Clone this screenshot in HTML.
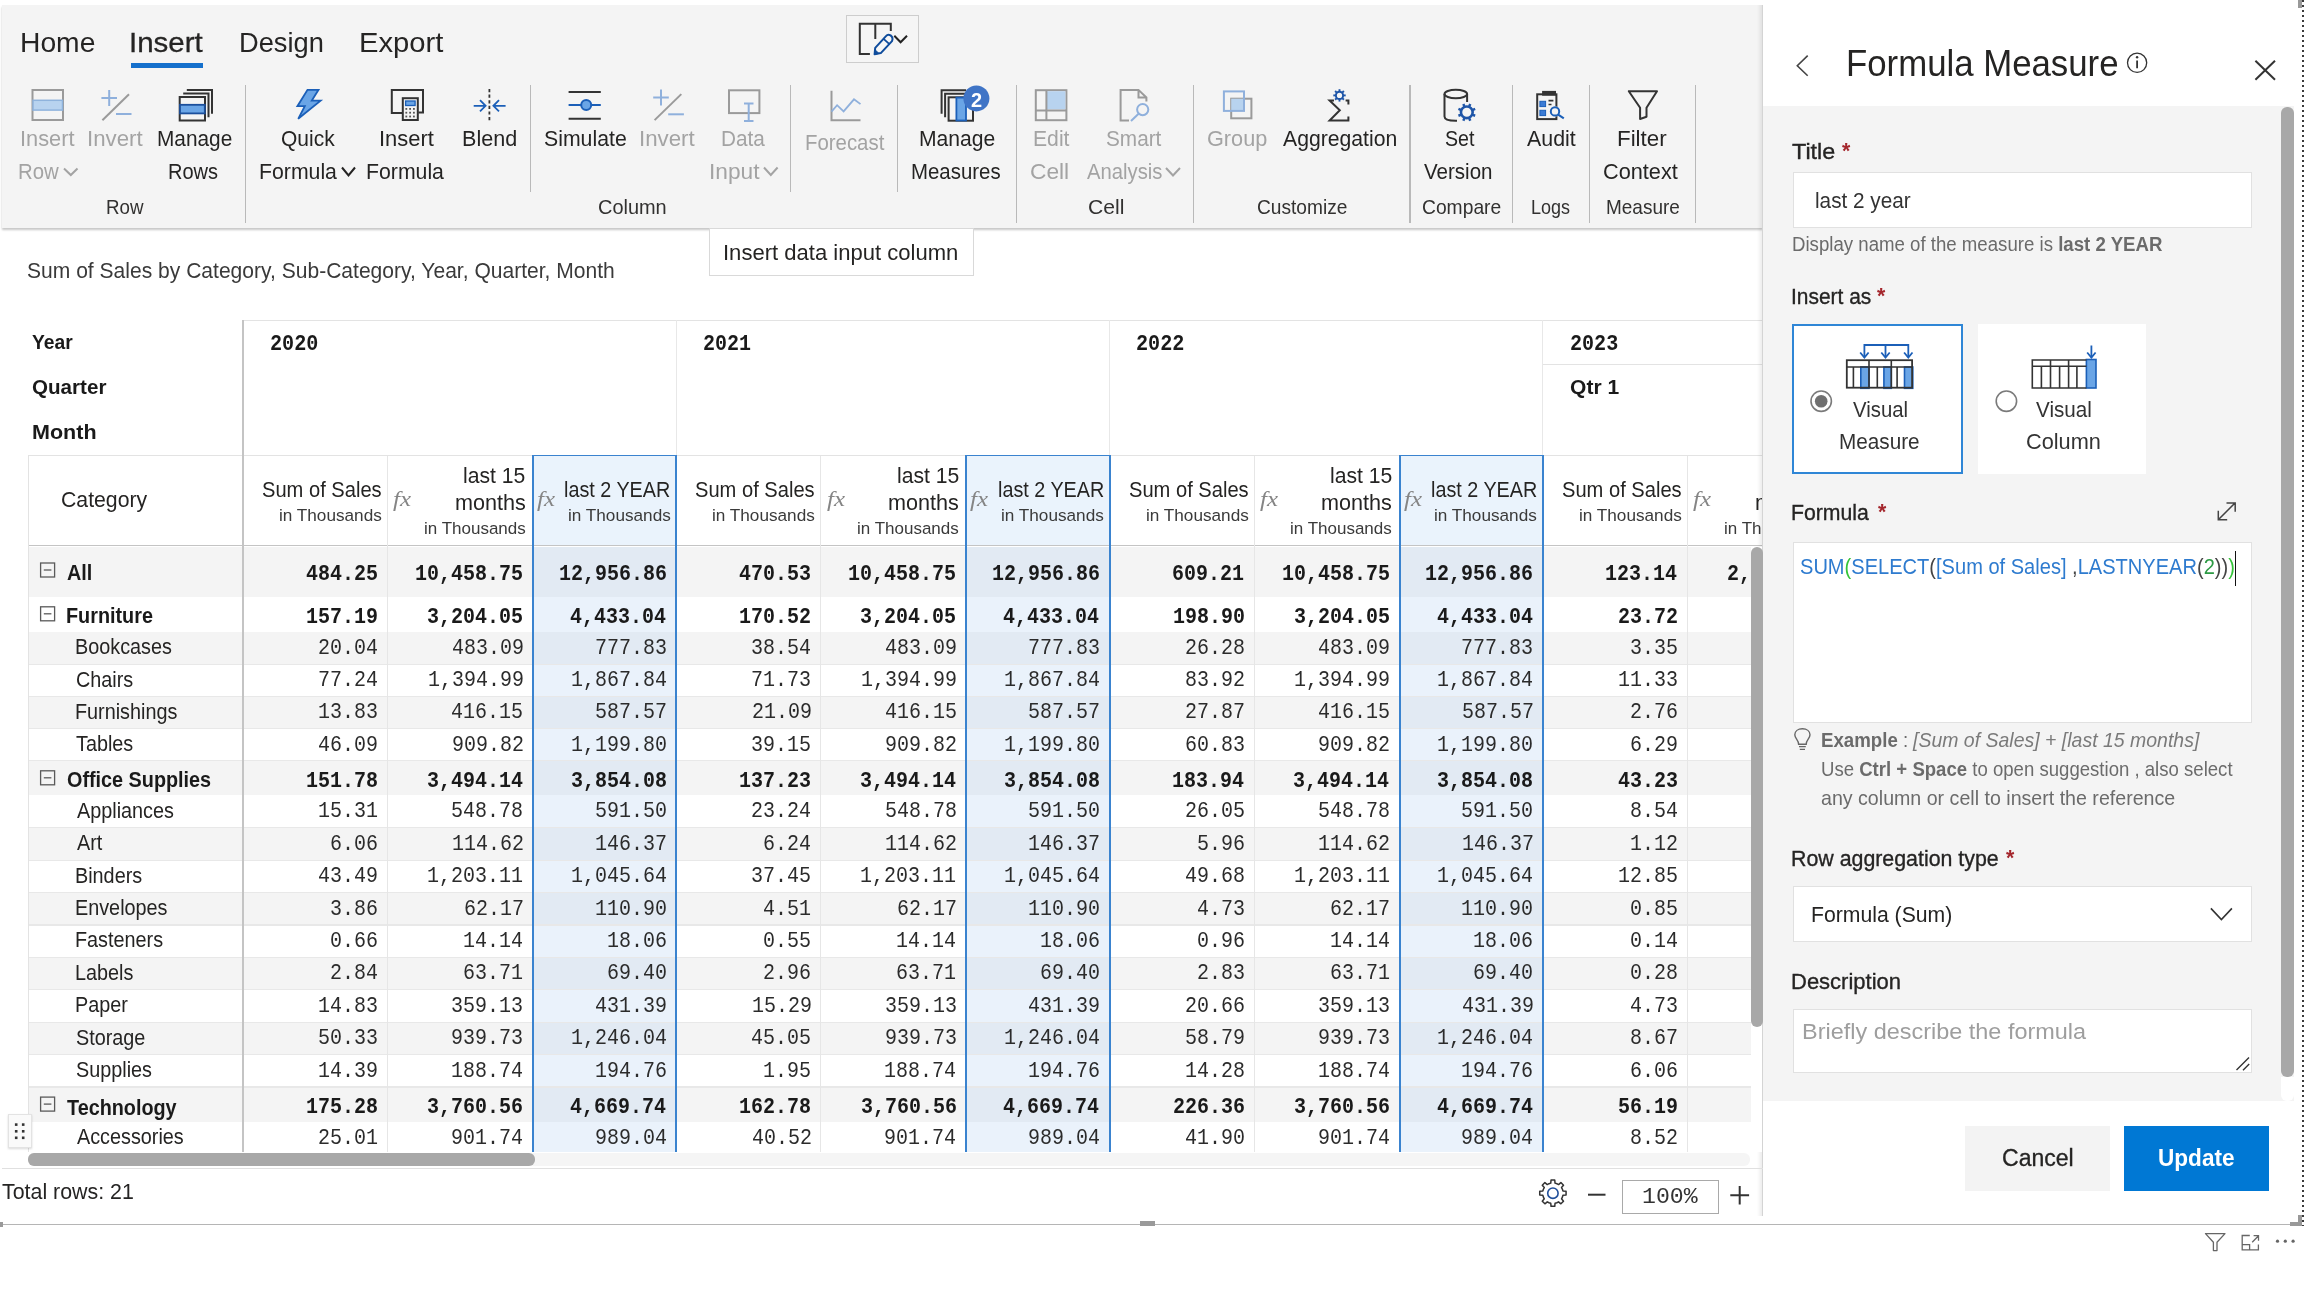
<!DOCTYPE html>
<html><head><meta charset="utf-8"><title>Formula Measure</title>
<style>
html,body{margin:0;padding:0;}
body{width:2304px;height:1290px;position:relative;overflow:hidden;background:#fff;font-family:"Liberation Sans",sans-serif;}
.t{position:absolute;white-space:nowrap;line-height:1;transform-origin:0 0;}
.L{position:absolute;left:0;top:0;width:2304px;height:1290px;will-change:transform;}
</style></head><body>
<div class="L"><div style="position:absolute;left:2.00px;top:5.00px;width:1761.00px;height:223.00px;background:#f4f4f4;box-shadow:0 1.5px 2px rgba(0,0,0,0.22);"></div><div style="position:absolute;left:130.80px;top:62.90px;width:72.20px;height:5.00px;background:#1570cc;"></div><div style="position:absolute;left:845.70px;top:15.30px;width:73.60px;height:48.00px;background:#f5f5f5;box-sizing:border-box;border:1.5px solid #cdcdcd;"></div><div style="position:absolute;left:245.00px;top:85.00px;width:1.20px;height:137.60px;background:#b9b9b9;"></div><div style="position:absolute;left:1016.20px;top:85.00px;width:1.20px;height:137.60px;background:#b9b9b9;"></div><div style="position:absolute;left:1193.00px;top:85.00px;width:1.20px;height:137.60px;background:#b9b9b9;"></div><div style="position:absolute;left:1409.40px;top:85.00px;width:1.20px;height:137.60px;background:#b9b9b9;"></div><div style="position:absolute;left:1511.80px;top:85.00px;width:1.20px;height:137.60px;background:#b9b9b9;"></div><div style="position:absolute;left:1588.90px;top:85.00px;width:1.20px;height:137.60px;background:#b9b9b9;"></div><div style="position:absolute;left:1694.90px;top:85.00px;width:1.20px;height:137.60px;background:#b9b9b9;"></div><div style="position:absolute;left:530.00px;top:85.00px;width:1.20px;height:107.40px;background:#b9b9b9;"></div><div style="position:absolute;left:790.00px;top:85.00px;width:1.20px;height:107.40px;background:#b9b9b9;"></div><div style="position:absolute;left:897.00px;top:85.00px;width:1.20px;height:107.40px;background:#b9b9b9;"></div><svg style="position:absolute;left:0;top:0" width="2304" height="1290" viewBox="0 0 2304 1290" fill="none"><polyline points="64.0,168.5 70.8,175.0 77.5,168.5" stroke="#a3a3a3" stroke-width="2" fill="none"/><polyline points="342.0,167.5 348.5,175.5 355.0,167.5" stroke="#252423" stroke-width="2" fill="none"/><polyline points="764.0,167.5 770.8,175.0 777.6,167.5" stroke="#a3a3a3" stroke-width="2" fill="none"/><polyline points="1166.0,168.0 1173.0,175.5 1180.0,168.0" stroke="#a3a3a3" stroke-width="2" fill="none"/><rect x="32.5" y="90" width="30.5" height="30" stroke="#9a9a9a" stroke-width="2"/><rect x="33" y="100.3" width="29.5" height="9.8" fill="#b8d3ef" stroke="#8fb3dc" stroke-width="1.5"/><path d="M109.2,89.9 v16 M101.4,97.9 h15.6" stroke="#8fb0dc" stroke-width="2"/><path d="M102.4,120.2 L129.0,94.2" stroke="#9a9a9a" stroke-width="2"/><path d="M116.0,114.0 H131.5" stroke="#8fb0dc" stroke-width="2"/><path d="M661.0,89.6 v16 M653.2,97.6 h15.6" stroke="#8fb0dc" stroke-width="2"/><path d="M654.6,120.1 L681.3,94.1" stroke="#9a9a9a" stroke-width="2"/><path d="M668.2,114.3 H683.9" stroke="#8fb0dc" stroke-width="2"/><path d="M186.8,90 H212 V113.8 M183.2,93.5 H208.5 V117.3" stroke="#333" stroke-width="2"/><rect x="179.7" y="97" width="25.3" height="23.5" fill="#f4f4f4" stroke="#333" stroke-width="2"/><rect x="180" y="104.8" width="24.8" height="8.6" fill="#6aa5e6" stroke="#1b4f9c" stroke-width="1.8"/><path d="M307.5,89.8 L318.5,89.8 L311.8,100.6 L320.6,100.6 L298.2,118.8 L304.8,106.2 L297.4,106.2 Z" fill="#6aa5e6" stroke="#1b5fb8" stroke-width="1.8" stroke-linejoin="miter"/><path d="M402,113 H391.8 V90 H423 V112.5 H418.4" stroke="#333" stroke-width="2"/><rect x="402.8" y="98.2" width="15" height="21.8" fill="#f4f4f4" stroke="#333" stroke-width="2"/><rect x="405.6" y="101" width="9.5" height="4.5" fill="#6aa5e6" stroke="#1b5fb8" stroke-width="1.3"/><rect x="405.4" y="108.0" width="1.8" height="1.8" fill="#555"/><rect x="409.2" y="108.0" width="1.8" height="1.8" fill="#555"/><rect x="413.0" y="108.0" width="1.8" height="1.8" fill="#555"/><rect x="405.4" y="111.8" width="1.8" height="1.8" fill="#555"/><rect x="409.2" y="111.8" width="1.8" height="1.8" fill="#555"/><rect x="413.0" y="111.8" width="1.8" height="1.8" fill="#555"/><rect x="405.4" y="115.6" width="1.8" height="1.8" fill="#555"/><rect x="409.2" y="115.6" width="1.8" height="1.8" fill="#555"/><rect x="413.0" y="115.6" width="1.8" height="1.8" fill="#555"/><path d="M489.4,89 V121.5" stroke="#333" stroke-width="1.8" stroke-dasharray="3.2,2.4"/><path d="M473.7,105.8 H485.5 M480,100.2 L485.6,105.8 L480,111.4 M505.6,105.8 H493.3 M499,100.2 L493.4,105.8 L499,111.4" stroke="#1b5fb8" stroke-width="1.8"/><path d="M568.6,91.9 H600.8 M568.6,118.8 H600.8" stroke="#333" stroke-width="2"/><path d="M568.6,104.9 H600.8" stroke="#1b5fb8" stroke-width="2"/><circle cx="586.2" cy="104.9" r="5" fill="#6aa5e6" stroke="#1b5fb8" stroke-width="2"/><rect x="729" y="90.3" width="30.4" height="22.8" stroke="#9a9a9a" stroke-width="2"/><path d="M748.7,103.6 V121 M744,103.6 H753.5 M744,121 H753.5" stroke="#8fb0dc" stroke-width="2"/><path d="M831.5,90.8 V120.3 H860.5" stroke="#9a9a9a" stroke-width="2"/><polyline points="831.5,111.7 837.1,105.2 843.6,111.4 854,99.3 860.5,104.1" stroke="#8fb0dc" stroke-width="1.8"/><path d="M941.6,113.8 V90.3 H966 M945.1,117.3 V93.8 H969.5" stroke="#333" stroke-width="2"/><rect x="948.6" y="97.3" width="24.4" height="23.4" fill="#f4f4f4" stroke="#333" stroke-width="2"/><rect x="956.4" y="97.6" width="9.6" height="22.9" fill="#6aa5e6" stroke="#1b5fb8" stroke-width="1.8"/><circle cx="976.4" cy="98.4" r="13" fill="#3f74c6"/><rect x="1035.8" y="90.2" width="30.6" height="30" stroke="#9a9a9a" stroke-width="2"/><rect x="1047" y="91.2" width="18.4" height="18.2" fill="#b8d3ef"/><path d="M1046.4,90.2 V120.2 M1035.8,110.4 H1066.4" stroke="#9a9a9a" stroke-width="2"/><path d="M1129,120.6 H1120.6 V89.9 H1138.5 L1146.4,97.5 V101.5 M1138.5,89.9 V97.5 H1146.4" stroke="#9a9a9a" stroke-width="2" fill="none"/><circle cx="1142.7" cy="109.6" r="5.6" stroke="#8fb0dc" stroke-width="2" fill="#f4f4f4"/><path d="M1138.6,113.8 L1131,121" stroke="#8fb0dc" stroke-width="2"/><rect x="1231.2" y="98.7" width="20.2" height="19.6" stroke="#9a9a9a" stroke-width="2"/><rect x="1231.2" y="98.7" width="12.8" height="12.2" fill="#b8d3ef"/><rect x="1223.9" y="91.4" width="20.1" height="19.5" stroke="#8fb0dc" stroke-width="2"/><path d="M1334,100.6 H1329.6 L1339.8,110.2 L1329.6,120.6 H1348.4 V116.5 M1345.6,100.6 H1348.4 V104.5" stroke="#333" stroke-width="2" fill="none"/><circle cx="1339.5" cy="95.4" r="6.8" fill="#f4f4f4"/><circle cx="1339.50" cy="95.40" r="3.60" stroke="#1f56a8" stroke-width="2.00" fill="none"/><path d="M1343.10,95.40 L1345.70,95.40" stroke="#1f56a8" stroke-width="1.90"/><path d="M1342.05,97.95 L1343.88,99.78" stroke="#1f56a8" stroke-width="1.90"/><path d="M1339.50,99.00 L1339.50,101.60" stroke="#1f56a8" stroke-width="1.90"/><path d="M1336.95,97.95 L1335.12,99.78" stroke="#1f56a8" stroke-width="1.90"/><path d="M1335.90,95.40 L1333.30,95.40" stroke="#1f56a8" stroke-width="1.90"/><path d="M1336.95,92.85 L1335.12,91.02" stroke="#1f56a8" stroke-width="1.90"/><path d="M1339.50,91.80 L1339.50,89.20" stroke="#1f56a8" stroke-width="1.90"/><path d="M1342.05,92.85 L1343.88,91.02" stroke="#1f56a8" stroke-width="1.90"/><path d="M1444.5,94 V116.5 Q1444.5,120.8 1455.8,120.8 H1457" stroke="#333" stroke-width="2" fill="none"/><ellipse cx="1455.8" cy="94" rx="11.3" ry="4.2" stroke="#333" stroke-width="2" fill="none"/><path d="M1467.1,94 V102" stroke="#333" stroke-width="2"/><circle cx="1466.6" cy="112" r="9.5" fill="#f4f4f4"/><circle cx="1466.80" cy="112.30" r="5.85" stroke="#1f56a8" stroke-width="2.60" fill="none"/><path d="M1472.20,114.54 L1475.16,115.76" stroke="#1f56a8" stroke-width="2.47"/><path d="M1469.04,117.70 L1470.26,120.66" stroke="#1f56a8" stroke-width="2.47"/><path d="M1464.56,117.70 L1463.34,120.66" stroke="#1f56a8" stroke-width="2.47"/><path d="M1461.40,114.54 L1458.44,115.76" stroke="#1f56a8" stroke-width="2.47"/><path d="M1461.40,110.06 L1458.44,108.84" stroke="#1f56a8" stroke-width="2.47"/><path d="M1464.56,106.90 L1463.34,103.94" stroke="#1f56a8" stroke-width="2.47"/><path d="M1469.04,106.90 L1470.26,103.94" stroke="#1f56a8" stroke-width="2.47"/><path d="M1472.20,110.06 L1475.16,108.84" stroke="#1f56a8" stroke-width="2.47"/><rect x="1537.2" y="94.3" width="19.2" height="24.8" stroke="#333" stroke-width="2"/><rect x="1542.1" y="90.9" width="13.9" height="4.8" fill="#333"/><rect x="1539.9" y="101.3" width="5.7" height="5.3" fill="#3a7bd5" stroke="#1b5fb8" stroke-width="1"/><rect x="1539.9" y="110.3" width="5.7" height="5.3" fill="#3a7bd5" stroke="#1b5fb8" stroke-width="1"/><path d="M1548.5,100.6 H1553.4 M1548.5,104.5 H1551.5" stroke="#333" stroke-width="1.6"/><circle cx="1555" cy="111.4" r="5.2" fill="#f4f4f4"/><circle cx="1555" cy="111.4" r="4.2" stroke="#1b5fb8" stroke-width="2"/><path d="M1558.2,114.6 L1563.8,118.4" stroke="#1b5fb8" stroke-width="2"/><path d="M1628.8,91.2 H1657 L1646.5,107.7 V116.8 L1640.1,119 V107.7 Z" stroke="#333" stroke-width="2" stroke-linejoin="round" fill="none"/><path d="M869.9,54.1 H859.8 V23.7 H890.8 V31 M875.3,23.7 V38.9" stroke="#333" stroke-width="2" fill="none"/><path d="M874.6,54.3 L880.8,53.1 L892.0,41.1 Q893.5,37.6 890.6,35.4 Q887.8,33.8 886.2,35.9 L875.2,47.9 Z" fill="#f7f7f7" stroke="#0f4c9c" stroke-width="2" stroke-linejoin="round"/><path d="M874.6,54.3 L878.9,53.4 L875.6,50.3 Z" fill="#0f4c9c" stroke="#0f4c9c" stroke-width="1"/><path d="M889.4,44.2 L883.6,38.9" stroke="#0f4c9c" stroke-width="1.8"/><polyline points="894.3,35.7 900.6,42.2 907,35.7" stroke="#222" stroke-width="2" fill="none"/></svg><div class="t" style="left:19.68px;top:28.17px;font:normal normal 28.50px/1 'Liberation Sans', sans-serif;color:#252423;transform:scaleX(0.9913);">Home</div><div class="t" style="left:129.08px;top:28.17px;font:normal normal 28.50px/1 'Liberation Sans', sans-serif;color:#252423;transform:scaleX(1.0344);-webkit-text-stroke:0.3px #252423;">Insert</div><div class="t" style="left:239.37px;top:28.17px;font:normal normal 28.50px/1 'Liberation Sans', sans-serif;color:#252423;transform:scaleX(0.9559);">Design</div><div class="t" style="left:359.00px;top:28.17px;font:normal normal 28.50px/1 'Liberation Sans', sans-serif;color:#252423;transform:scaleX(1.0247);">Export</div><div class="t" style="left:19.69px;top:128.37px;font:normal normal 22.00px/1 'Liberation Sans', sans-serif;color:#a3a3a3;transform:scaleX(0.9898);">Insert</div><div class="t" style="left:17.53px;top:160.67px;font:normal normal 22.00px/1 'Liberation Sans', sans-serif;color:#a3a3a3;transform:scaleX(0.9251);">Row</div><div class="t" style="left:87.25px;top:128.37px;font:normal normal 22.00px/1 'Liberation Sans', sans-serif;color:#a3a3a3;transform:scaleX(1.0106);">Invert</div><div class="t" style="left:157.09px;top:128.37px;font:normal normal 22.00px/1 'Liberation Sans', sans-serif;color:#252423;transform:scaleX(0.9461);">Manage</div><div class="t" style="left:168.36px;top:160.67px;font:normal normal 22.00px/1 'Liberation Sans', sans-serif;color:#252423;transform:scaleX(0.9100);">Rows</div><div class="t" style="left:105.76px;top:196.89px;font:normal normal 20.80px/1 'Liberation Sans', sans-serif;color:#323130;transform:scaleX(0.9010);">Row</div><div class="t" style="left:280.71px;top:128.37px;font:normal normal 22.00px/1 'Liberation Sans', sans-serif;color:#252423;transform:scaleX(0.9540);">Quick</div><div class="t" style="left:259.06px;top:160.67px;font:normal normal 22.00px/1 'Liberation Sans', sans-serif;color:#252423;transform:scaleX(0.9660);">Formula</div><div class="t" style="left:379.28px;top:128.37px;font:normal normal 22.00px/1 'Liberation Sans', sans-serif;color:#252423;transform:scaleX(0.9974);">Insert</div><div class="t" style="left:365.86px;top:160.67px;font:normal normal 22.00px/1 'Liberation Sans', sans-serif;color:#252423;transform:scaleX(0.9660);">Formula</div><div class="t" style="left:462.23px;top:128.37px;font:normal normal 22.00px/1 'Liberation Sans', sans-serif;color:#252423;transform:scaleX(0.9800);">Blend</div><div class="t" style="left:543.53px;top:128.37px;font:normal normal 22.00px/1 'Liberation Sans', sans-serif;color:#252423;transform:scaleX(0.9663);">Simulate</div><div class="t" style="left:639.44px;top:128.37px;font:normal normal 22.00px/1 'Liberation Sans', sans-serif;color:#a3a3a3;transform:scaleX(1.0125);">Invert</div><div class="t" style="left:721.30px;top:128.37px;font:normal normal 22.00px/1 'Liberation Sans', sans-serif;color:#a3a3a3;transform:scaleX(0.9445);">Data</div><div class="t" style="left:709.11px;top:160.67px;font:normal normal 22.00px/1 'Liberation Sans', sans-serif;color:#a3a3a3;transform:scaleX(1.0311);">Input</div><div class="t" style="left:597.59px;top:196.89px;font:normal normal 20.80px/1 'Liberation Sans', sans-serif;color:#323130;transform:scaleX(0.9586);">Column</div><div class="t" style="left:804.83px;top:132.07px;font:normal normal 22.00px/1 'Liberation Sans', sans-serif;color:#a3a3a3;transform:scaleX(0.9267);">Forecast</div><div class="t" style="left:919.27px;top:128.37px;font:normal normal 22.00px/1 'Liberation Sans', sans-serif;color:#252423;transform:scaleX(0.9592);">Manage</div><div class="t" style="left:910.93px;top:160.67px;font:normal normal 22.00px/1 'Liberation Sans', sans-serif;color:#252423;transform:scaleX(0.9277);">Measures</div><div class="t" style="left:1032.56px;top:128.37px;font:normal normal 22.00px/1 'Liberation Sans', sans-serif;color:#a3a3a3;transform:scaleX(0.9623);">Edit</div><div class="t" style="left:1030.35px;top:160.67px;font:normal normal 22.00px/1 'Liberation Sans', sans-serif;color:#a3a3a3;transform:scaleX(1.0335);">Cell</div><div class="t" style="left:1105.66px;top:128.37px;font:normal normal 22.00px/1 'Liberation Sans', sans-serif;color:#a3a3a3;transform:scaleX(0.9439);">Smart</div><div class="t" style="left:1087.36px;top:160.67px;font:normal normal 22.00px/1 'Liberation Sans', sans-serif;color:#a3a3a3;transform:scaleX(0.9200);">Analysis</div><div class="t" style="left:1087.83px;top:196.89px;font:normal normal 20.80px/1 'Liberation Sans', sans-serif;color:#323130;transform:scaleX(1.0156);">Cell</div><div class="t" style="left:1207.31px;top:128.37px;font:normal normal 22.00px/1 'Liberation Sans', sans-serif;color:#a3a3a3;transform:scaleX(0.9860);">Group</div><div class="t" style="left:1282.96px;top:128.37px;font:normal normal 22.00px/1 'Liberation Sans', sans-serif;color:#252423;transform:scaleX(0.9626);">Aggregation</div><div class="t" style="left:1256.83px;top:196.89px;font:normal normal 20.80px/1 'Liberation Sans', sans-serif;color:#323130;transform:scaleX(0.9203);">Customize</div><div class="t" style="left:1444.91px;top:128.37px;font:normal normal 22.00px/1 'Liberation Sans', sans-serif;color:#252423;transform:scaleX(0.8911);">Set</div><div class="t" style="left:1424.31px;top:160.67px;font:normal normal 22.00px/1 'Liberation Sans', sans-serif;color:#252423;transform:scaleX(0.9337);">Version</div><div class="t" style="left:1421.52px;top:196.89px;font:normal normal 20.80px/1 'Liberation Sans', sans-serif;color:#323130;transform:scaleX(0.9262);">Compare</div><div class="t" style="left:1526.86px;top:128.37px;font:normal normal 22.00px/1 'Liberation Sans', sans-serif;color:#252423;transform:scaleX(0.9709);">Audit</div><div class="t" style="left:1531.02px;top:196.89px;font:normal normal 20.80px/1 'Liberation Sans', sans-serif;color:#323130;transform:scaleX(0.8652);">Logs</div><div class="t" style="left:1617.37px;top:128.37px;font:normal normal 22.00px/1 'Liberation Sans', sans-serif;color:#252423;transform:scaleX(1.0145);">Filter</div><div class="t" style="left:1602.90px;top:160.67px;font:normal normal 22.00px/1 'Liberation Sans', sans-serif;color:#252423;transform:scaleX(0.9859);">Context</div><div class="t" style="left:1605.64px;top:196.89px;font:normal normal 20.80px/1 'Liberation Sans', sans-serif;color:#323130;transform:scaleX(0.9120);">Measure</div><div class="t" style="left:970.90px;top:88.72px;font:normal bold 21.00px/1 'Liberation Sans', sans-serif;color:#fff;transform:scaleX(0.9500);">2</div><div class="t" style="left:26.54px;top:260.15px;font:normal normal 22.50px/1 'Liberation Sans', sans-serif;color:#3a3a3a;transform:scaleX(0.9356);">Sum of Sales by Category, Sub-Category, Year, Quarter, Month</div></div>
<div class="L" style="width:1763px;height:1152px;overflow:hidden"><div style="position:absolute;left:28.00px;top:546.50px;width:1723.00px;height:50.30px;background:#f4f4f4;"></div><div style="position:absolute;left:532.90px;top:546.50px;width:143.40px;height:50.30px;background:#e2eaf3;"></div><div style="position:absolute;left:966.20px;top:546.50px;width:143.40px;height:50.30px;background:#e2eaf3;"></div><div style="position:absolute;left:1399.50px;top:546.50px;width:143.40px;height:50.30px;background:#e2eaf3;"></div><div style="position:absolute;left:28.00px;top:596.80px;width:1723.00px;height:35.20px;background:#ffffff;"></div><div style="position:absolute;left:532.90px;top:596.80px;width:143.40px;height:35.20px;background:#eaf2fb;"></div><div style="position:absolute;left:966.20px;top:596.80px;width:143.40px;height:35.20px;background:#eaf2fb;"></div><div style="position:absolute;left:1399.50px;top:596.80px;width:143.40px;height:35.20px;background:#eaf2fb;"></div><div style="position:absolute;left:28.00px;top:632.00px;width:1723.00px;height:32.20px;background:#f4f4f4;"></div><div style="position:absolute;left:532.90px;top:632.00px;width:143.40px;height:32.20px;background:#e2eaf3;"></div><div style="position:absolute;left:966.20px;top:632.00px;width:143.40px;height:32.20px;background:#e2eaf3;"></div><div style="position:absolute;left:1399.50px;top:632.00px;width:143.40px;height:32.20px;background:#e2eaf3;"></div><div style="position:absolute;left:28.00px;top:664.20px;width:1723.00px;height:32.20px;background:#ffffff;"></div><div style="position:absolute;left:532.90px;top:664.20px;width:143.40px;height:32.20px;background:#eaf2fb;"></div><div style="position:absolute;left:966.20px;top:664.20px;width:143.40px;height:32.20px;background:#eaf2fb;"></div><div style="position:absolute;left:1399.50px;top:664.20px;width:143.40px;height:32.20px;background:#eaf2fb;"></div><div style="position:absolute;left:28.00px;top:696.40px;width:1723.00px;height:32.20px;background:#f4f4f4;"></div><div style="position:absolute;left:532.90px;top:696.40px;width:143.40px;height:32.20px;background:#e2eaf3;"></div><div style="position:absolute;left:966.20px;top:696.40px;width:143.40px;height:32.20px;background:#e2eaf3;"></div><div style="position:absolute;left:1399.50px;top:696.40px;width:143.40px;height:32.20px;background:#e2eaf3;"></div><div style="position:absolute;left:28.00px;top:728.60px;width:1723.00px;height:32.20px;background:#ffffff;"></div><div style="position:absolute;left:532.90px;top:728.60px;width:143.40px;height:32.20px;background:#eaf2fb;"></div><div style="position:absolute;left:966.20px;top:728.60px;width:143.40px;height:32.20px;background:#eaf2fb;"></div><div style="position:absolute;left:1399.50px;top:728.60px;width:143.40px;height:32.20px;background:#eaf2fb;"></div><div style="position:absolute;left:28.00px;top:760.80px;width:1723.00px;height:34.50px;background:#f4f4f4;"></div><div style="position:absolute;left:532.90px;top:760.80px;width:143.40px;height:34.50px;background:#e2eaf3;"></div><div style="position:absolute;left:966.20px;top:760.80px;width:143.40px;height:34.50px;background:#e2eaf3;"></div><div style="position:absolute;left:1399.50px;top:760.80px;width:143.40px;height:34.50px;background:#e2eaf3;"></div><div style="position:absolute;left:28.00px;top:795.30px;width:1723.00px;height:32.42px;background:#ffffff;"></div><div style="position:absolute;left:532.90px;top:795.30px;width:143.40px;height:32.42px;background:#eaf2fb;"></div><div style="position:absolute;left:966.20px;top:795.30px;width:143.40px;height:32.42px;background:#eaf2fb;"></div><div style="position:absolute;left:1399.50px;top:795.30px;width:143.40px;height:32.42px;background:#eaf2fb;"></div><div style="position:absolute;left:28.00px;top:827.72px;width:1723.00px;height:32.42px;background:#f4f4f4;"></div><div style="position:absolute;left:532.90px;top:827.72px;width:143.40px;height:32.42px;background:#e2eaf3;"></div><div style="position:absolute;left:966.20px;top:827.72px;width:143.40px;height:32.42px;background:#e2eaf3;"></div><div style="position:absolute;left:1399.50px;top:827.72px;width:143.40px;height:32.42px;background:#e2eaf3;"></div><div style="position:absolute;left:28.00px;top:860.14px;width:1723.00px;height:32.42px;background:#ffffff;"></div><div style="position:absolute;left:532.90px;top:860.14px;width:143.40px;height:32.42px;background:#eaf2fb;"></div><div style="position:absolute;left:966.20px;top:860.14px;width:143.40px;height:32.42px;background:#eaf2fb;"></div><div style="position:absolute;left:1399.50px;top:860.14px;width:143.40px;height:32.42px;background:#eaf2fb;"></div><div style="position:absolute;left:28.00px;top:892.56px;width:1723.00px;height:32.42px;background:#f4f4f4;"></div><div style="position:absolute;left:532.90px;top:892.56px;width:143.40px;height:32.42px;background:#e2eaf3;"></div><div style="position:absolute;left:966.20px;top:892.56px;width:143.40px;height:32.42px;background:#e2eaf3;"></div><div style="position:absolute;left:1399.50px;top:892.56px;width:143.40px;height:32.42px;background:#e2eaf3;"></div><div style="position:absolute;left:28.00px;top:924.98px;width:1723.00px;height:32.42px;background:#ffffff;"></div><div style="position:absolute;left:532.90px;top:924.98px;width:143.40px;height:32.42px;background:#eaf2fb;"></div><div style="position:absolute;left:966.20px;top:924.98px;width:143.40px;height:32.42px;background:#eaf2fb;"></div><div style="position:absolute;left:1399.50px;top:924.98px;width:143.40px;height:32.42px;background:#eaf2fb;"></div><div style="position:absolute;left:28.00px;top:957.40px;width:1723.00px;height:32.42px;background:#f4f4f4;"></div><div style="position:absolute;left:532.90px;top:957.40px;width:143.40px;height:32.42px;background:#e2eaf3;"></div><div style="position:absolute;left:966.20px;top:957.40px;width:143.40px;height:32.42px;background:#e2eaf3;"></div><div style="position:absolute;left:1399.50px;top:957.40px;width:143.40px;height:32.42px;background:#e2eaf3;"></div><div style="position:absolute;left:28.00px;top:989.82px;width:1723.00px;height:32.42px;background:#ffffff;"></div><div style="position:absolute;left:532.90px;top:989.82px;width:143.40px;height:32.42px;background:#eaf2fb;"></div><div style="position:absolute;left:966.20px;top:989.82px;width:143.40px;height:32.42px;background:#eaf2fb;"></div><div style="position:absolute;left:1399.50px;top:989.82px;width:143.40px;height:32.42px;background:#eaf2fb;"></div><div style="position:absolute;left:28.00px;top:1022.24px;width:1723.00px;height:32.42px;background:#f4f4f4;"></div><div style="position:absolute;left:532.90px;top:1022.24px;width:143.40px;height:32.42px;background:#e2eaf3;"></div><div style="position:absolute;left:966.20px;top:1022.24px;width:143.40px;height:32.42px;background:#e2eaf3;"></div><div style="position:absolute;left:1399.50px;top:1022.24px;width:143.40px;height:32.42px;background:#e2eaf3;"></div><div style="position:absolute;left:28.00px;top:1054.66px;width:1723.00px;height:32.42px;background:#ffffff;"></div><div style="position:absolute;left:532.90px;top:1054.66px;width:143.40px;height:32.42px;background:#eaf2fb;"></div><div style="position:absolute;left:966.20px;top:1054.66px;width:143.40px;height:32.42px;background:#eaf2fb;"></div><div style="position:absolute;left:1399.50px;top:1054.66px;width:143.40px;height:32.42px;background:#eaf2fb;"></div><div style="position:absolute;left:28.00px;top:1087.08px;width:1723.00px;height:34.90px;background:#f4f4f4;"></div><div style="position:absolute;left:532.90px;top:1087.08px;width:143.40px;height:34.90px;background:#e2eaf3;"></div><div style="position:absolute;left:966.20px;top:1087.08px;width:143.40px;height:34.90px;background:#e2eaf3;"></div><div style="position:absolute;left:1399.50px;top:1087.08px;width:143.40px;height:34.90px;background:#e2eaf3;"></div><div style="position:absolute;left:28.00px;top:1121.98px;width:1723.00px;height:32.40px;background:#ffffff;"></div><div style="position:absolute;left:532.90px;top:1121.98px;width:143.40px;height:32.40px;background:#eaf2fb;"></div><div style="position:absolute;left:966.20px;top:1121.98px;width:143.40px;height:32.40px;background:#eaf2fb;"></div><div style="position:absolute;left:1399.50px;top:1121.98px;width:143.40px;height:32.40px;background:#eaf2fb;"></div><div style="position:absolute;left:28.00px;top:663.60px;width:1723.00px;height:1.20px;background:#e8e8e8;"></div><div style="position:absolute;left:28.00px;top:695.80px;width:1723.00px;height:1.20px;background:#e8e8e8;"></div><div style="position:absolute;left:28.00px;top:728.00px;width:1723.00px;height:1.20px;background:#e8e8e8;"></div><div style="position:absolute;left:28.00px;top:760.20px;width:1723.00px;height:1.20px;background:#e8e8e8;"></div><div style="position:absolute;left:28.00px;top:827.12px;width:1723.00px;height:1.20px;background:#e8e8e8;"></div><div style="position:absolute;left:28.00px;top:859.54px;width:1723.00px;height:1.20px;background:#e8e8e8;"></div><div style="position:absolute;left:28.00px;top:891.96px;width:1723.00px;height:1.20px;background:#e8e8e8;"></div><div style="position:absolute;left:28.00px;top:924.38px;width:1723.00px;height:1.20px;background:#e8e8e8;"></div><div style="position:absolute;left:28.00px;top:956.80px;width:1723.00px;height:1.20px;background:#e8e8e8;"></div><div style="position:absolute;left:28.00px;top:989.22px;width:1723.00px;height:1.20px;background:#e8e8e8;"></div><div style="position:absolute;left:28.00px;top:1021.64px;width:1723.00px;height:1.20px;background:#e8e8e8;"></div><div style="position:absolute;left:28.00px;top:1054.06px;width:1723.00px;height:1.20px;background:#e8e8e8;"></div><div style="position:absolute;left:28.00px;top:1086.48px;width:1723.00px;height:1.20px;background:#e8e8e8;"></div><div style="position:absolute;left:532.90px;top:455.50px;width:143.40px;height:90.50px;background:#eaf3fc;"></div><div style="position:absolute;left:966.20px;top:455.50px;width:143.40px;height:90.50px;background:#eaf3fc;"></div><div style="position:absolute;left:1399.50px;top:455.50px;width:143.40px;height:90.50px;background:#eaf3fc;"></div><div style="position:absolute;left:243.00px;top:319.50px;width:1520.00px;height:1.20px;background:#e3e3e3;"></div><div style="position:absolute;left:28.00px;top:455.00px;width:1735.00px;height:1.00px;background:#e3e3e3;"></div><div style="position:absolute;left:28.00px;top:544.80px;width:1735.00px;height:1.70px;background:#c4c4c4;"></div><div style="position:absolute;left:27.50px;top:455.50px;width:1.20px;height:696.50px;background:#e3e3e3;"></div><div style="position:absolute;left:242.00px;top:320.00px;width:2.00px;height:832.00px;background:#c4c4c4;"></div><div style="position:absolute;left:675.80px;top:320.00px;width:1.00px;height:135.50px;background:#e8e8e8;"></div><div style="position:absolute;left:1109.10px;top:320.00px;width:1.00px;height:135.50px;background:#e8e8e8;"></div><div style="position:absolute;left:1542.40px;top:320.00px;width:1.00px;height:135.50px;background:#e8e8e8;"></div><div style="position:absolute;left:387.10px;top:455.50px;width:1.00px;height:696.50px;background:#e6e6e6;"></div><div style="position:absolute;left:532.40px;top:455.50px;width:1.00px;height:696.50px;background:#e6e6e6;"></div><div style="position:absolute;left:675.80px;top:455.50px;width:1.00px;height:696.50px;background:#e6e6e6;"></div><div style="position:absolute;left:820.40px;top:455.50px;width:1.00px;height:696.50px;background:#e6e6e6;"></div><div style="position:absolute;left:965.70px;top:455.50px;width:1.00px;height:696.50px;background:#e6e6e6;"></div><div style="position:absolute;left:1109.10px;top:455.50px;width:1.00px;height:696.50px;background:#e6e6e6;"></div><div style="position:absolute;left:1253.70px;top:455.50px;width:1.00px;height:696.50px;background:#e6e6e6;"></div><div style="position:absolute;left:1399.00px;top:455.50px;width:1.00px;height:696.50px;background:#e6e6e6;"></div><div style="position:absolute;left:1542.40px;top:455.50px;width:1.00px;height:696.50px;background:#e6e6e6;"></div><div style="position:absolute;left:1687.00px;top:455.50px;width:1.00px;height:696.50px;background:#e6e6e6;"></div><div style="position:absolute;left:1832.30px;top:455.50px;width:1.00px;height:696.50px;background:#e6e6e6;"></div><div style="position:absolute;left:1542.90px;top:363.70px;width:220.10px;height:1.10px;background:#e3e3e3;"></div><div style="position:absolute;left:531.90px;top:454.60px;width:145.40px;height:1.80px;background:#3a83cf;"></div><div style="position:absolute;left:531.90px;top:454.60px;width:2.00px;height:697.40px;background:#3a83cf;"></div><div style="position:absolute;left:675.30px;top:454.60px;width:2.00px;height:697.40px;background:#3a83cf;"></div><div style="position:absolute;left:965.20px;top:454.60px;width:145.40px;height:1.80px;background:#3a83cf;"></div><div style="position:absolute;left:965.20px;top:454.60px;width:2.00px;height:697.40px;background:#3a83cf;"></div><div style="position:absolute;left:1108.60px;top:454.60px;width:2.00px;height:697.40px;background:#3a83cf;"></div><div style="position:absolute;left:1398.50px;top:454.60px;width:145.40px;height:1.80px;background:#3a83cf;"></div><div style="position:absolute;left:1398.50px;top:454.60px;width:2.00px;height:697.40px;background:#3a83cf;"></div><div style="position:absolute;left:1541.90px;top:454.60px;width:2.00px;height:697.40px;background:#3a83cf;"></div><svg style="position:absolute;left:0;top:0" width="2304" height="1290" viewBox="0 0 2304 1290" fill="none"><rect x="40.6" y="563.0" width="14" height="14" stroke="#5a5a5a" stroke-width="1.3" fill="none"/><path d="M43.8,570.0 H51.4" stroke="#5a5a5a" stroke-width="1.3"/><rect x="40.6" y="606.8" width="14" height="14" stroke="#5a5a5a" stroke-width="1.3" fill="none"/><path d="M43.8,613.8 H51.4" stroke="#5a5a5a" stroke-width="1.3"/><rect x="40.6" y="770.8" width="14" height="14" stroke="#5a5a5a" stroke-width="1.3" fill="none"/><path d="M43.8,777.8 H51.4" stroke="#5a5a5a" stroke-width="1.3"/><rect x="40.6" y="1097.1" width="14" height="14" stroke="#5a5a5a" stroke-width="1.3" fill="none"/><path d="M43.8,1104.1 H51.4" stroke="#5a5a5a" stroke-width="1.3"/></svg><div class="t" style="left:32.47px;top:331.59px;font:normal bold 20.80px/1 'Liberation Sans', sans-serif;color:#1a1a1a;transform:scaleX(0.9265);">Year</div><div class="t" style="left:32.15px;top:376.59px;font:normal bold 20.80px/1 'Liberation Sans', sans-serif;color:#1a1a1a;transform:scaleX(0.9911);">Quarter</div><div class="t" style="left:31.56px;top:421.59px;font:normal bold 20.80px/1 'Liberation Sans', sans-serif;color:#1a1a1a;transform:scaleX(1.0353);">Month</div><div class="t" style="left:60.92px;top:489.37px;font:normal normal 22.00px/1 'Liberation Sans', sans-serif;color:#252423;transform:scaleX(0.9646);">Category</div><div class="t" style="left:270.19px;top:333.53px;font:normal bold 21.50px/1 'Liberation Mono', monospace;color:#1a1a1a;transform:scaleX(0.9373);">2020</div><div class="t" style="left:703.40px;top:333.53px;font:normal bold 21.50px/1 'Liberation Mono', monospace;color:#1a1a1a;transform:scaleX(0.9311);">2021</div><div class="t" style="left:1135.69px;top:333.53px;font:normal bold 21.50px/1 'Liberation Mono', monospace;color:#1a1a1a;transform:scaleX(0.9377);">2022</div><div class="t" style="left:1569.79px;top:333.53px;font:normal bold 21.50px/1 'Liberation Mono', monospace;color:#1a1a1a;transform:scaleX(0.9345);">2023</div><div class="t" style="left:1570.14px;top:377.39px;font:normal bold 20.80px/1 'Liberation Sans', sans-serif;color:#1a1a1a;transform:scaleX(1.0124);">Qtr 1</div><div class="t" style="left:262.19px;top:478.87px;font:normal normal 22.00px/1 'Liberation Sans', sans-serif;color:#252423;transform:scaleX(0.9144);">Sum of Sales</div><div class="t" style="left:278.95px;top:507.58px;font:normal normal 16.80px/1 'Liberation Sans', sans-serif;color:#3a3a3a;transform:scaleX(1.0231);">in Thousands</div><div class="t" style="left:393.32px;top:489.05px;font:italic normal 20.00px/1 'Liberation Serif', serif;color:#858585;transform:scaleX(1.2441);">fx</div><div class="t" style="left:463.48px;top:464.97px;font:normal normal 22.00px/1 'Liberation Sans', sans-serif;color:#252423;transform:scaleX(0.9612);">last 15</div><div class="t" style="left:454.87px;top:491.97px;font:normal normal 22.00px/1 'Liberation Sans', sans-serif;color:#252423;transform:scaleX(0.9814);">months</div><div class="t" style="left:423.76px;top:520.78px;font:normal normal 16.80px/1 'Liberation Sans', sans-serif;color:#3a3a3a;transform:scaleX(1.0129);">in Thousands</div><div class="t" style="left:537.12px;top:489.05px;font:italic normal 20.00px/1 'Liberation Serif', serif;color:#858585;transform:scaleX(1.2441);">fx</div><div class="t" style="left:564.47px;top:478.87px;font:normal normal 22.00px/1 'Liberation Sans', sans-serif;color:#252423;transform:scaleX(0.8988);">last 2 YEAR</div><div class="t" style="left:567.65px;top:507.58px;font:normal normal 16.80px/1 'Liberation Sans', sans-serif;color:#3a3a3a;transform:scaleX(1.0231);">in Thousands</div><div class="t" style="left:695.49px;top:478.87px;font:normal normal 22.00px/1 'Liberation Sans', sans-serif;color:#252423;transform:scaleX(0.9144);">Sum of Sales</div><div class="t" style="left:712.25px;top:507.58px;font:normal normal 16.80px/1 'Liberation Sans', sans-serif;color:#3a3a3a;transform:scaleX(1.0231);">in Thousands</div><div class="t" style="left:826.62px;top:489.05px;font:italic normal 20.00px/1 'Liberation Serif', serif;color:#858585;transform:scaleX(1.2441);">fx</div><div class="t" style="left:896.78px;top:464.97px;font:normal normal 22.00px/1 'Liberation Sans', sans-serif;color:#252423;transform:scaleX(0.9612);">last 15</div><div class="t" style="left:888.17px;top:491.97px;font:normal normal 22.00px/1 'Liberation Sans', sans-serif;color:#252423;transform:scaleX(0.9814);">months</div><div class="t" style="left:857.06px;top:520.78px;font:normal normal 16.80px/1 'Liberation Sans', sans-serif;color:#3a3a3a;transform:scaleX(1.0129);">in Thousands</div><div class="t" style="left:970.42px;top:489.05px;font:italic normal 20.00px/1 'Liberation Serif', serif;color:#858585;transform:scaleX(1.2441);">fx</div><div class="t" style="left:997.77px;top:478.87px;font:normal normal 22.00px/1 'Liberation Sans', sans-serif;color:#252423;transform:scaleX(0.8988);">last 2 YEAR</div><div class="t" style="left:1000.95px;top:507.58px;font:normal normal 16.80px/1 'Liberation Sans', sans-serif;color:#3a3a3a;transform:scaleX(1.0231);">in Thousands</div><div class="t" style="left:1128.79px;top:478.87px;font:normal normal 22.00px/1 'Liberation Sans', sans-serif;color:#252423;transform:scaleX(0.9144);">Sum of Sales</div><div class="t" style="left:1145.55px;top:507.58px;font:normal normal 16.80px/1 'Liberation Sans', sans-serif;color:#3a3a3a;transform:scaleX(1.0231);">in Thousands</div><div class="t" style="left:1259.92px;top:489.05px;font:italic normal 20.00px/1 'Liberation Serif', serif;color:#858585;transform:scaleX(1.2441);">fx</div><div class="t" style="left:1330.08px;top:464.97px;font:normal normal 22.00px/1 'Liberation Sans', sans-serif;color:#252423;transform:scaleX(0.9612);">last 15</div><div class="t" style="left:1321.47px;top:491.97px;font:normal normal 22.00px/1 'Liberation Sans', sans-serif;color:#252423;transform:scaleX(0.9814);">months</div><div class="t" style="left:1290.36px;top:520.78px;font:normal normal 16.80px/1 'Liberation Sans', sans-serif;color:#3a3a3a;transform:scaleX(1.0129);">in Thousands</div><div class="t" style="left:1403.72px;top:489.05px;font:italic normal 20.00px/1 'Liberation Serif', serif;color:#858585;transform:scaleX(1.2441);">fx</div><div class="t" style="left:1431.07px;top:478.87px;font:normal normal 22.00px/1 'Liberation Sans', sans-serif;color:#252423;transform:scaleX(0.8988);">last 2 YEAR</div><div class="t" style="left:1434.25px;top:507.58px;font:normal normal 16.80px/1 'Liberation Sans', sans-serif;color:#3a3a3a;transform:scaleX(1.0231);">in Thousands</div><div class="t" style="left:1562.09px;top:478.87px;font:normal normal 22.00px/1 'Liberation Sans', sans-serif;color:#252423;transform:scaleX(0.9144);">Sum of Sales</div><div class="t" style="left:1578.85px;top:507.58px;font:normal normal 16.80px/1 'Liberation Sans', sans-serif;color:#3a3a3a;transform:scaleX(1.0231);">in Thousands</div><div class="t" style="left:1693.22px;top:489.05px;font:italic normal 20.00px/1 'Liberation Serif', serif;color:#858585;transform:scaleX(1.2441);">fx</div><div class="t" style="left:1763.38px;top:464.97px;font:normal normal 22.00px/1 'Liberation Sans', sans-serif;color:#252423;transform:scaleX(0.9612);">last 15</div><div class="t" style="left:1754.77px;top:491.97px;font:normal normal 22.00px/1 'Liberation Sans', sans-serif;color:#252423;transform:scaleX(0.9814);">months</div><div class="t" style="left:1723.66px;top:520.78px;font:normal normal 16.80px/1 'Liberation Sans', sans-serif;color:#3a3a3a;transform:scaleX(1.0129);">in Thousands</div><div class="t" style="left:66.91px;top:561.67px;font:normal bold 22.00px/1 'Liberation Sans', sans-serif;color:#1a1a1a;transform:scaleX(0.9000);">All</div><div class="t" style="left:305.89px;top:563.06px;font:normal bold 22.50px/1 'Liberation Mono', monospace;color:#1a1a1a;transform:scaleX(0.8889);">484.25</div><div class="t" style="left:415.17px;top:563.06px;font:normal bold 22.50px/1 'Liberation Mono', monospace;color:#1a1a1a;transform:scaleX(0.8889);">10,458.75</div><div class="t" style="left:558.65px;top:563.06px;font:normal bold 22.50px/1 'Liberation Mono', monospace;color:#1a1a1a;transform:scaleX(0.8889);">12,956.86</div><div class="t" style="left:739.17px;top:563.06px;font:normal bold 22.50px/1 'Liberation Mono', monospace;color:#1a1a1a;transform:scaleX(0.8889);">470.53</div><div class="t" style="left:848.47px;top:563.06px;font:normal bold 22.50px/1 'Liberation Mono', monospace;color:#1a1a1a;transform:scaleX(0.8889);">10,458.75</div><div class="t" style="left:991.95px;top:563.06px;font:normal bold 22.50px/1 'Liberation Mono', monospace;color:#1a1a1a;transform:scaleX(0.8889);">12,956.86</div><div class="t" style="left:1172.30px;top:563.06px;font:normal bold 22.50px/1 'Liberation Mono', monospace;color:#1a1a1a;transform:scaleX(0.8889);">609.21</div><div class="t" style="left:1281.77px;top:563.06px;font:normal bold 22.50px/1 'Liberation Mono', monospace;color:#1a1a1a;transform:scaleX(0.8889);">10,458.75</div><div class="t" style="left:1425.25px;top:563.06px;font:normal bold 22.50px/1 'Liberation Mono', monospace;color:#1a1a1a;transform:scaleX(0.8889);">12,956.86</div><div class="t" style="left:1605.35px;top:563.06px;font:normal bold 22.50px/1 'Liberation Mono', monospace;color:#1a1a1a;transform:scaleX(0.8889);">123.14</div><div class="t" style="left:1727.07px;top:563.06px;font:normal bold 22.50px/1 'Liberation Mono', monospace;color:#1a1a1a;transform:scaleX(0.8889);">2,458.75</div><div class="t" style="left:66.08px;top:604.97px;font:normal bold 22.00px/1 'Liberation Sans', sans-serif;color:#1a1a1a;transform:scaleX(0.9000);">Furniture</div><div class="t" style="left:306.05px;top:606.36px;font:normal bold 22.50px/1 'Liberation Mono', monospace;color:#1a1a1a;transform:scaleX(0.8889);">157.19</div><div class="t" style="left:427.17px;top:606.36px;font:normal bold 22.50px/1 'Liberation Mono', monospace;color:#1a1a1a;transform:scaleX(0.8889);">3,204.05</div><div class="t" style="left:570.13px;top:606.36px;font:normal bold 22.50px/1 'Liberation Mono', monospace;color:#1a1a1a;transform:scaleX(0.8889);">4,433.04</div><div class="t" style="left:739.32px;top:606.36px;font:normal bold 22.50px/1 'Liberation Mono', monospace;color:#1a1a1a;transform:scaleX(0.8889);">170.52</div><div class="t" style="left:860.47px;top:606.36px;font:normal bold 22.50px/1 'Liberation Mono', monospace;color:#1a1a1a;transform:scaleX(0.8889);">3,204.05</div><div class="t" style="left:1003.43px;top:606.36px;font:normal bold 22.50px/1 'Liberation Mono', monospace;color:#1a1a1a;transform:scaleX(0.8889);">4,433.04</div><div class="t" style="left:1172.61px;top:606.36px;font:normal bold 22.50px/1 'Liberation Mono', monospace;color:#1a1a1a;transform:scaleX(0.8889);">198.90</div><div class="t" style="left:1293.77px;top:606.36px;font:normal bold 22.50px/1 'Liberation Mono', monospace;color:#1a1a1a;transform:scaleX(0.8889);">3,204.05</div><div class="t" style="left:1436.73px;top:606.36px;font:normal bold 22.50px/1 'Liberation Mono', monospace;color:#1a1a1a;transform:scaleX(0.8889);">4,433.04</div><div class="t" style="left:1617.92px;top:606.36px;font:normal bold 22.50px/1 'Liberation Mono', monospace;color:#1a1a1a;transform:scaleX(0.8889);">23.72</div><div class="t" style="left:75.08px;top:636.37px;font:normal normal 22.00px/1 'Liberation Sans', sans-serif;color:#252423;transform:scaleX(0.9000);">Bookcases</div><div class="t" style="left:317.87px;top:637.06px;font:normal normal 22.50px/1 'Liberation Mono', monospace;color:#2b2b2b;transform:scaleX(0.8889);">20.04</div><div class="t" style="left:451.54px;top:637.06px;font:normal normal 22.50px/1 'Liberation Mono', monospace;color:#2b2b2b;transform:scaleX(0.8889);">483.09</div><div class="t" style="left:594.82px;top:637.06px;font:normal normal 22.50px/1 'Liberation Mono', monospace;color:#2b2b2b;transform:scaleX(0.8889);">777.83</div><div class="t" style="left:751.17px;top:637.06px;font:normal normal 22.50px/1 'Liberation Mono', monospace;color:#2b2b2b;transform:scaleX(0.8889);">38.54</div><div class="t" style="left:884.84px;top:637.06px;font:normal normal 22.50px/1 'Liberation Mono', monospace;color:#2b2b2b;transform:scaleX(0.8889);">483.09</div><div class="t" style="left:1028.12px;top:637.06px;font:normal normal 22.50px/1 'Liberation Mono', monospace;color:#2b2b2b;transform:scaleX(0.8889);">777.83</div><div class="t" style="left:1184.77px;top:637.06px;font:normal normal 22.50px/1 'Liberation Mono', monospace;color:#2b2b2b;transform:scaleX(0.8889);">26.28</div><div class="t" style="left:1318.14px;top:637.06px;font:normal normal 22.50px/1 'Liberation Mono', monospace;color:#2b2b2b;transform:scaleX(0.8889);">483.09</div><div class="t" style="left:1461.42px;top:637.06px;font:normal normal 22.50px/1 'Liberation Mono', monospace;color:#2b2b2b;transform:scaleX(0.8889);">777.83</div><div class="t" style="left:1630.02px;top:637.06px;font:normal normal 22.50px/1 'Liberation Mono', monospace;color:#2b2b2b;transform:scaleX(0.8889);">3.35</div><div class="t" style="left:75.69px;top:668.57px;font:normal normal 22.00px/1 'Liberation Sans', sans-serif;color:#252423;transform:scaleX(0.9000);">Chairs</div><div class="t" style="left:317.87px;top:669.26px;font:normal normal 22.50px/1 'Liberation Mono', monospace;color:#2b2b2b;transform:scaleX(0.8889);">77.24</div><div class="t" style="left:427.53px;top:669.26px;font:normal normal 22.50px/1 'Liberation Mono', monospace;color:#2b2b2b;transform:scaleX(0.8889);">1,394.99</div><div class="t" style="left:570.55px;top:669.26px;font:normal normal 22.50px/1 'Liberation Mono', monospace;color:#2b2b2b;transform:scaleX(0.8889);">1,867.84</div><div class="t" style="left:751.42px;top:669.26px;font:normal normal 22.50px/1 'Liberation Mono', monospace;color:#2b2b2b;transform:scaleX(0.8889);">71.73</div><div class="t" style="left:860.83px;top:669.26px;font:normal normal 22.50px/1 'Liberation Mono', monospace;color:#2b2b2b;transform:scaleX(0.8889);">1,394.99</div><div class="t" style="left:1003.85px;top:669.26px;font:normal normal 22.50px/1 'Liberation Mono', monospace;color:#2b2b2b;transform:scaleX(0.8889);">1,867.84</div><div class="t" style="left:1184.87px;top:669.26px;font:normal normal 22.50px/1 'Liberation Mono', monospace;color:#2b2b2b;transform:scaleX(0.8889);">83.92</div><div class="t" style="left:1294.13px;top:669.26px;font:normal normal 22.50px/1 'Liberation Mono', monospace;color:#2b2b2b;transform:scaleX(0.8889);">1,394.99</div><div class="t" style="left:1437.15px;top:669.26px;font:normal normal 22.50px/1 'Liberation Mono', monospace;color:#2b2b2b;transform:scaleX(0.8889);">1,867.84</div><div class="t" style="left:1618.02px;top:669.26px;font:normal normal 22.50px/1 'Liberation Mono', monospace;color:#2b2b2b;transform:scaleX(0.8889);">11.33</div><div class="t" style="left:75.08px;top:700.77px;font:normal normal 22.00px/1 'Liberation Sans', sans-serif;color:#252423;transform:scaleX(0.9000);">Furnishings</div><div class="t" style="left:318.12px;top:701.46px;font:normal normal 22.50px/1 'Liberation Mono', monospace;color:#2b2b2b;transform:scaleX(0.8889);">13.83</div><div class="t" style="left:451.42px;top:701.46px;font:normal normal 22.50px/1 'Liberation Mono', monospace;color:#2b2b2b;transform:scaleX(0.8889);">416.15</div><div class="t" style="left:595.12px;top:701.46px;font:normal normal 22.50px/1 'Liberation Mono', monospace;color:#2b2b2b;transform:scaleX(0.8889);">587.57</div><div class="t" style="left:751.54px;top:701.46px;font:normal normal 22.50px/1 'Liberation Mono', monospace;color:#2b2b2b;transform:scaleX(0.8889);">21.09</div><div class="t" style="left:884.72px;top:701.46px;font:normal normal 22.50px/1 'Liberation Mono', monospace;color:#2b2b2b;transform:scaleX(0.8889);">416.15</div><div class="t" style="left:1028.42px;top:701.46px;font:normal normal 22.50px/1 'Liberation Mono', monospace;color:#2b2b2b;transform:scaleX(0.8889);">587.57</div><div class="t" style="left:1185.02px;top:701.46px;font:normal normal 22.50px/1 'Liberation Mono', monospace;color:#2b2b2b;transform:scaleX(0.8889);">27.87</div><div class="t" style="left:1318.02px;top:701.46px;font:normal normal 22.50px/1 'Liberation Mono', monospace;color:#2b2b2b;transform:scaleX(0.8889);">416.15</div><div class="t" style="left:1461.72px;top:701.46px;font:normal normal 22.50px/1 'Liberation Mono', monospace;color:#2b2b2b;transform:scaleX(0.8889);">587.57</div><div class="t" style="left:1630.05px;top:701.46px;font:normal normal 22.50px/1 'Liberation Mono', monospace;color:#2b2b2b;transform:scaleX(0.8889);">2.76</div><div class="t" style="left:76.26px;top:732.97px;font:normal normal 22.00px/1 'Liberation Sans', sans-serif;color:#252423;transform:scaleX(0.9000);">Tables</div><div class="t" style="left:318.24px;top:733.66px;font:normal normal 22.50px/1 'Liberation Mono', monospace;color:#2b2b2b;transform:scaleX(0.8889);">46.09</div><div class="t" style="left:451.57px;top:733.66px;font:normal normal 22.50px/1 'Liberation Mono', monospace;color:#2b2b2b;transform:scaleX(0.8889);">909.82</div><div class="t" style="left:570.77px;top:733.66px;font:normal normal 22.50px/1 'Liberation Mono', monospace;color:#2b2b2b;transform:scaleX(0.8889);">1,199.80</div><div class="t" style="left:751.42px;top:733.66px;font:normal normal 22.50px/1 'Liberation Mono', monospace;color:#2b2b2b;transform:scaleX(0.8889);">39.15</div><div class="t" style="left:884.87px;top:733.66px;font:normal normal 22.50px/1 'Liberation Mono', monospace;color:#2b2b2b;transform:scaleX(0.8889);">909.82</div><div class="t" style="left:1004.07px;top:733.66px;font:normal normal 22.50px/1 'Liberation Mono', monospace;color:#2b2b2b;transform:scaleX(0.8889);">1,199.80</div><div class="t" style="left:1184.72px;top:733.66px;font:normal normal 22.50px/1 'Liberation Mono', monospace;color:#2b2b2b;transform:scaleX(0.8889);">60.83</div><div class="t" style="left:1318.17px;top:733.66px;font:normal normal 22.50px/1 'Liberation Mono', monospace;color:#2b2b2b;transform:scaleX(0.8889);">909.82</div><div class="t" style="left:1437.37px;top:733.66px;font:normal normal 22.50px/1 'Liberation Mono', monospace;color:#2b2b2b;transform:scaleX(0.8889);">1,199.80</div><div class="t" style="left:1630.14px;top:733.66px;font:normal normal 22.50px/1 'Liberation Mono', monospace;color:#2b2b2b;transform:scaleX(0.8889);">6.29</div><div class="t" style="left:66.59px;top:769.37px;font:normal bold 22.00px/1 'Liberation Sans', sans-serif;color:#1a1a1a;transform:scaleX(0.9000);">Office Supplies</div><div class="t" style="left:305.92px;top:770.06px;font:normal bold 22.50px/1 'Liberation Mono', monospace;color:#1a1a1a;transform:scaleX(0.8889);">151.78</div><div class="t" style="left:426.73px;top:770.06px;font:normal bold 22.50px/1 'Liberation Mono', monospace;color:#1a1a1a;transform:scaleX(0.8889);">3,494.14</div><div class="t" style="left:570.60px;top:770.06px;font:normal bold 22.50px/1 'Liberation Mono', monospace;color:#1a1a1a;transform:scaleX(0.8889);">3,854.08</div><div class="t" style="left:739.17px;top:770.06px;font:normal bold 22.50px/1 'Liberation Mono', monospace;color:#1a1a1a;transform:scaleX(0.8889);">137.23</div><div class="t" style="left:860.03px;top:770.06px;font:normal bold 22.50px/1 'Liberation Mono', monospace;color:#1a1a1a;transform:scaleX(0.8889);">3,494.14</div><div class="t" style="left:1003.90px;top:770.06px;font:normal bold 22.50px/1 'Liberation Mono', monospace;color:#1a1a1a;transform:scaleX(0.8889);">3,854.08</div><div class="t" style="left:1172.05px;top:770.06px;font:normal bold 22.50px/1 'Liberation Mono', monospace;color:#1a1a1a;transform:scaleX(0.8889);">183.94</div><div class="t" style="left:1293.33px;top:770.06px;font:normal bold 22.50px/1 'Liberation Mono', monospace;color:#1a1a1a;transform:scaleX(0.8889);">3,494.14</div><div class="t" style="left:1437.20px;top:770.06px;font:normal bold 22.50px/1 'Liberation Mono', monospace;color:#1a1a1a;transform:scaleX(0.8889);">3,854.08</div><div class="t" style="left:1617.77px;top:770.06px;font:normal bold 22.50px/1 'Liberation Mono', monospace;color:#1a1a1a;transform:scaleX(0.8889);">43.23</div><div class="t" style="left:76.66px;top:799.67px;font:normal normal 22.00px/1 'Liberation Sans', sans-serif;color:#252423;transform:scaleX(0.9000);">Appliances</div><div class="t" style="left:317.82px;top:800.36px;font:normal normal 22.50px/1 'Liberation Mono', monospace;color:#2b2b2b;transform:scaleX(0.8889);">15.31</div><div class="t" style="left:451.47px;top:800.36px;font:normal normal 22.50px/1 'Liberation Mono', monospace;color:#2b2b2b;transform:scaleX(0.8889);">548.78</div><div class="t" style="left:594.78px;top:800.36px;font:normal normal 22.50px/1 'Liberation Mono', monospace;color:#2b2b2b;transform:scaleX(0.8889);">591.50</div><div class="t" style="left:751.17px;top:800.36px;font:normal normal 22.50px/1 'Liberation Mono', monospace;color:#2b2b2b;transform:scaleX(0.8889);">23.24</div><div class="t" style="left:884.77px;top:800.36px;font:normal normal 22.50px/1 'Liberation Mono', monospace;color:#2b2b2b;transform:scaleX(0.8889);">548.78</div><div class="t" style="left:1028.08px;top:800.36px;font:normal normal 22.50px/1 'Liberation Mono', monospace;color:#2b2b2b;transform:scaleX(0.8889);">591.50</div><div class="t" style="left:1184.72px;top:800.36px;font:normal normal 22.50px/1 'Liberation Mono', monospace;color:#2b2b2b;transform:scaleX(0.8889);">26.05</div><div class="t" style="left:1318.07px;top:800.36px;font:normal normal 22.50px/1 'Liberation Mono', monospace;color:#2b2b2b;transform:scaleX(0.8889);">548.78</div><div class="t" style="left:1461.38px;top:800.36px;font:normal normal 22.50px/1 'Liberation Mono', monospace;color:#2b2b2b;transform:scaleX(0.8889);">591.50</div><div class="t" style="left:1629.77px;top:800.36px;font:normal normal 22.50px/1 'Liberation Mono', monospace;color:#2b2b2b;transform:scaleX(0.8889);">8.54</div><div class="t" style="left:76.66px;top:832.09px;font:normal normal 22.00px/1 'Liberation Sans', sans-serif;color:#252423;transform:scaleX(0.9000);">Art</div><div class="t" style="left:330.15px;top:832.78px;font:normal normal 22.50px/1 'Liberation Mono', monospace;color:#2b2b2b;transform:scaleX(0.8889);">6.06</div><div class="t" style="left:451.57px;top:832.78px;font:normal normal 22.50px/1 'Liberation Mono', monospace;color:#2b2b2b;transform:scaleX(0.8889);">114.62</div><div class="t" style="left:595.12px;top:832.78px;font:normal normal 22.50px/1 'Liberation Mono', monospace;color:#2b2b2b;transform:scaleX(0.8889);">146.37</div><div class="t" style="left:763.17px;top:832.78px;font:normal normal 22.50px/1 'Liberation Mono', monospace;color:#2b2b2b;transform:scaleX(0.8889);">6.24</div><div class="t" style="left:884.87px;top:832.78px;font:normal normal 22.50px/1 'Liberation Mono', monospace;color:#2b2b2b;transform:scaleX(0.8889);">114.62</div><div class="t" style="left:1028.42px;top:832.78px;font:normal normal 22.50px/1 'Liberation Mono', monospace;color:#2b2b2b;transform:scaleX(0.8889);">146.37</div><div class="t" style="left:1196.75px;top:832.78px;font:normal normal 22.50px/1 'Liberation Mono', monospace;color:#2b2b2b;transform:scaleX(0.8889);">5.96</div><div class="t" style="left:1318.17px;top:832.78px;font:normal normal 22.50px/1 'Liberation Mono', monospace;color:#2b2b2b;transform:scaleX(0.8889);">114.62</div><div class="t" style="left:1461.72px;top:832.78px;font:normal normal 22.50px/1 'Liberation Mono', monospace;color:#2b2b2b;transform:scaleX(0.8889);">146.37</div><div class="t" style="left:1630.17px;top:832.78px;font:normal normal 22.50px/1 'Liberation Mono', monospace;color:#2b2b2b;transform:scaleX(0.8889);">1.12</div><div class="t" style="left:75.08px;top:864.51px;font:normal normal 22.00px/1 'Liberation Sans', sans-serif;color:#252423;transform:scaleX(0.9000);">Binders</div><div class="t" style="left:318.24px;top:865.20px;font:normal normal 22.50px/1 'Liberation Mono', monospace;color:#2b2b2b;transform:scaleX(0.8889);">43.49</div><div class="t" style="left:427.11px;top:865.20px;font:normal normal 22.50px/1 'Liberation Mono', monospace;color:#2b2b2b;transform:scaleX(0.8889);">1,203.11</div><div class="t" style="left:570.55px;top:865.20px;font:normal normal 22.50px/1 'Liberation Mono', monospace;color:#2b2b2b;transform:scaleX(0.8889);">1,045.64</div><div class="t" style="left:751.42px;top:865.20px;font:normal normal 22.50px/1 'Liberation Mono', monospace;color:#2b2b2b;transform:scaleX(0.8889);">37.45</div><div class="t" style="left:860.41px;top:865.20px;font:normal normal 22.50px/1 'Liberation Mono', monospace;color:#2b2b2b;transform:scaleX(0.8889);">1,203.11</div><div class="t" style="left:1003.85px;top:865.20px;font:normal normal 22.50px/1 'Liberation Mono', monospace;color:#2b2b2b;transform:scaleX(0.8889);">1,045.64</div><div class="t" style="left:1184.77px;top:865.20px;font:normal normal 22.50px/1 'Liberation Mono', monospace;color:#2b2b2b;transform:scaleX(0.8889);">49.68</div><div class="t" style="left:1293.71px;top:865.20px;font:normal normal 22.50px/1 'Liberation Mono', monospace;color:#2b2b2b;transform:scaleX(0.8889);">1,203.11</div><div class="t" style="left:1437.15px;top:865.20px;font:normal normal 22.50px/1 'Liberation Mono', monospace;color:#2b2b2b;transform:scaleX(0.8889);">1,045.64</div><div class="t" style="left:1618.02px;top:865.20px;font:normal normal 22.50px/1 'Liberation Mono', monospace;color:#2b2b2b;transform:scaleX(0.8889);">12.85</div><div class="t" style="left:75.08px;top:896.93px;font:normal normal 22.00px/1 'Liberation Sans', sans-serif;color:#252423;transform:scaleX(0.9000);">Envelopes</div><div class="t" style="left:330.15px;top:897.62px;font:normal normal 22.50px/1 'Liberation Mono', monospace;color:#2b2b2b;transform:scaleX(0.8889);">3.86</div><div class="t" style="left:463.72px;top:897.62px;font:normal normal 22.50px/1 'Liberation Mono', monospace;color:#2b2b2b;transform:scaleX(0.8889);">62.17</div><div class="t" style="left:594.78px;top:897.62px;font:normal normal 22.50px/1 'Liberation Mono', monospace;color:#2b2b2b;transform:scaleX(0.8889);">110.90</div><div class="t" style="left:763.12px;top:897.62px;font:normal normal 22.50px/1 'Liberation Mono', monospace;color:#2b2b2b;transform:scaleX(0.8889);">4.51</div><div class="t" style="left:897.02px;top:897.62px;font:normal normal 22.50px/1 'Liberation Mono', monospace;color:#2b2b2b;transform:scaleX(0.8889);">62.17</div><div class="t" style="left:1028.08px;top:897.62px;font:normal normal 22.50px/1 'Liberation Mono', monospace;color:#2b2b2b;transform:scaleX(0.8889);">110.90</div><div class="t" style="left:1196.72px;top:897.62px;font:normal normal 22.50px/1 'Liberation Mono', monospace;color:#2b2b2b;transform:scaleX(0.8889);">4.73</div><div class="t" style="left:1330.32px;top:897.62px;font:normal normal 22.50px/1 'Liberation Mono', monospace;color:#2b2b2b;transform:scaleX(0.8889);">62.17</div><div class="t" style="left:1461.38px;top:897.62px;font:normal normal 22.50px/1 'Liberation Mono', monospace;color:#2b2b2b;transform:scaleX(0.8889);">110.90</div><div class="t" style="left:1630.02px;top:897.62px;font:normal normal 22.50px/1 'Liberation Mono', monospace;color:#2b2b2b;transform:scaleX(0.8889);">0.85</div><div class="t" style="left:75.08px;top:929.35px;font:normal normal 22.00px/1 'Liberation Sans', sans-serif;color:#252423;transform:scaleX(0.9000);">Fasteners</div><div class="t" style="left:330.15px;top:930.04px;font:normal normal 22.50px/1 'Liberation Mono', monospace;color:#2b2b2b;transform:scaleX(0.8889);">0.66</div><div class="t" style="left:463.17px;top:930.04px;font:normal normal 22.50px/1 'Liberation Mono', monospace;color:#2b2b2b;transform:scaleX(0.8889);">14.14</div><div class="t" style="left:606.85px;top:930.04px;font:normal normal 22.50px/1 'Liberation Mono', monospace;color:#2b2b2b;transform:scaleX(0.8889);">18.06</div><div class="t" style="left:763.42px;top:930.04px;font:normal normal 22.50px/1 'Liberation Mono', monospace;color:#2b2b2b;transform:scaleX(0.8889);">0.55</div><div class="t" style="left:896.47px;top:930.04px;font:normal normal 22.50px/1 'Liberation Mono', monospace;color:#2b2b2b;transform:scaleX(0.8889);">14.14</div><div class="t" style="left:1040.15px;top:930.04px;font:normal normal 22.50px/1 'Liberation Mono', monospace;color:#2b2b2b;transform:scaleX(0.8889);">18.06</div><div class="t" style="left:1196.75px;top:930.04px;font:normal normal 22.50px/1 'Liberation Mono', monospace;color:#2b2b2b;transform:scaleX(0.8889);">0.96</div><div class="t" style="left:1329.77px;top:930.04px;font:normal normal 22.50px/1 'Liberation Mono', monospace;color:#2b2b2b;transform:scaleX(0.8889);">14.14</div><div class="t" style="left:1473.45px;top:930.04px;font:normal normal 22.50px/1 'Liberation Mono', monospace;color:#2b2b2b;transform:scaleX(0.8889);">18.06</div><div class="t" style="left:1629.77px;top:930.04px;font:normal normal 22.50px/1 'Liberation Mono', monospace;color:#2b2b2b;transform:scaleX(0.8889);">0.14</div><div class="t" style="left:75.08px;top:961.77px;font:normal normal 22.00px/1 'Liberation Sans', sans-serif;color:#252423;transform:scaleX(0.9000);">Labels</div><div class="t" style="left:329.87px;top:962.46px;font:normal normal 22.50px/1 'Liberation Mono', monospace;color:#2b2b2b;transform:scaleX(0.8889);">2.84</div><div class="t" style="left:463.12px;top:962.46px;font:normal normal 22.50px/1 'Liberation Mono', monospace;color:#2b2b2b;transform:scaleX(0.8889);">63.71</div><div class="t" style="left:606.78px;top:962.46px;font:normal normal 22.50px/1 'Liberation Mono', monospace;color:#2b2b2b;transform:scaleX(0.8889);">69.40</div><div class="t" style="left:763.45px;top:962.46px;font:normal normal 22.50px/1 'Liberation Mono', monospace;color:#2b2b2b;transform:scaleX(0.8889);">2.96</div><div class="t" style="left:896.42px;top:962.46px;font:normal normal 22.50px/1 'Liberation Mono', monospace;color:#2b2b2b;transform:scaleX(0.8889);">63.71</div><div class="t" style="left:1040.08px;top:962.46px;font:normal normal 22.50px/1 'Liberation Mono', monospace;color:#2b2b2b;transform:scaleX(0.8889);">69.40</div><div class="t" style="left:1196.72px;top:962.46px;font:normal normal 22.50px/1 'Liberation Mono', monospace;color:#2b2b2b;transform:scaleX(0.8889);">2.83</div><div class="t" style="left:1329.72px;top:962.46px;font:normal normal 22.50px/1 'Liberation Mono', monospace;color:#2b2b2b;transform:scaleX(0.8889);">63.71</div><div class="t" style="left:1473.38px;top:962.46px;font:normal normal 22.50px/1 'Liberation Mono', monospace;color:#2b2b2b;transform:scaleX(0.8889);">69.40</div><div class="t" style="left:1630.07px;top:962.46px;font:normal normal 22.50px/1 'Liberation Mono', monospace;color:#2b2b2b;transform:scaleX(0.8889);">0.28</div><div class="t" style="left:75.08px;top:994.19px;font:normal normal 22.00px/1 'Liberation Sans', sans-serif;color:#252423;transform:scaleX(0.9000);">Paper</div><div class="t" style="left:318.12px;top:994.88px;font:normal normal 22.50px/1 'Liberation Mono', monospace;color:#2b2b2b;transform:scaleX(0.8889);">14.83</div><div class="t" style="left:451.42px;top:994.88px;font:normal normal 22.50px/1 'Liberation Mono', monospace;color:#2b2b2b;transform:scaleX(0.8889);">359.13</div><div class="t" style="left:594.94px;top:994.88px;font:normal normal 22.50px/1 'Liberation Mono', monospace;color:#2b2b2b;transform:scaleX(0.8889);">431.39</div><div class="t" style="left:751.54px;top:994.88px;font:normal normal 22.50px/1 'Liberation Mono', monospace;color:#2b2b2b;transform:scaleX(0.8889);">15.29</div><div class="t" style="left:884.72px;top:994.88px;font:normal normal 22.50px/1 'Liberation Mono', monospace;color:#2b2b2b;transform:scaleX(0.8889);">359.13</div><div class="t" style="left:1028.24px;top:994.88px;font:normal normal 22.50px/1 'Liberation Mono', monospace;color:#2b2b2b;transform:scaleX(0.8889);">431.39</div><div class="t" style="left:1184.75px;top:994.88px;font:normal normal 22.50px/1 'Liberation Mono', monospace;color:#2b2b2b;transform:scaleX(0.8889);">20.66</div><div class="t" style="left:1318.02px;top:994.88px;font:normal normal 22.50px/1 'Liberation Mono', monospace;color:#2b2b2b;transform:scaleX(0.8889);">359.13</div><div class="t" style="left:1461.54px;top:994.88px;font:normal normal 22.50px/1 'Liberation Mono', monospace;color:#2b2b2b;transform:scaleX(0.8889);">431.39</div><div class="t" style="left:1630.02px;top:994.88px;font:normal normal 22.50px/1 'Liberation Mono', monospace;color:#2b2b2b;transform:scaleX(0.8889);">4.73</div><div class="t" style="left:75.80px;top:1026.61px;font:normal normal 22.00px/1 'Liberation Sans', sans-serif;color:#252423;transform:scaleX(0.9000);">Storage</div><div class="t" style="left:318.12px;top:1027.30px;font:normal normal 22.50px/1 'Liberation Mono', monospace;color:#2b2b2b;transform:scaleX(0.8889);">50.33</div><div class="t" style="left:451.42px;top:1027.30px;font:normal normal 22.50px/1 'Liberation Mono', monospace;color:#2b2b2b;transform:scaleX(0.8889);">939.73</div><div class="t" style="left:570.55px;top:1027.30px;font:normal normal 22.50px/1 'Liberation Mono', monospace;color:#2b2b2b;transform:scaleX(0.8889);">1,246.04</div><div class="t" style="left:751.42px;top:1027.30px;font:normal normal 22.50px/1 'Liberation Mono', monospace;color:#2b2b2b;transform:scaleX(0.8889);">45.05</div><div class="t" style="left:884.72px;top:1027.30px;font:normal normal 22.50px/1 'Liberation Mono', monospace;color:#2b2b2b;transform:scaleX(0.8889);">939.73</div><div class="t" style="left:1003.85px;top:1027.30px;font:normal normal 22.50px/1 'Liberation Mono', monospace;color:#2b2b2b;transform:scaleX(0.8889);">1,246.04</div><div class="t" style="left:1184.84px;top:1027.30px;font:normal normal 22.50px/1 'Liberation Mono', monospace;color:#2b2b2b;transform:scaleX(0.8889);">58.79</div><div class="t" style="left:1318.02px;top:1027.30px;font:normal normal 22.50px/1 'Liberation Mono', monospace;color:#2b2b2b;transform:scaleX(0.8889);">939.73</div><div class="t" style="left:1437.15px;top:1027.30px;font:normal normal 22.50px/1 'Liberation Mono', monospace;color:#2b2b2b;transform:scaleX(0.8889);">1,246.04</div><div class="t" style="left:1630.32px;top:1027.30px;font:normal normal 22.50px/1 'Liberation Mono', monospace;color:#2b2b2b;transform:scaleX(0.8889);">8.67</div><div class="t" style="left:75.80px;top:1059.03px;font:normal normal 22.00px/1 'Liberation Sans', sans-serif;color:#252423;transform:scaleX(0.9000);">Supplies</div><div class="t" style="left:318.24px;top:1059.72px;font:normal normal 22.50px/1 'Liberation Mono', monospace;color:#2b2b2b;transform:scaleX(0.8889);">14.39</div><div class="t" style="left:451.17px;top:1059.72px;font:normal normal 22.50px/1 'Liberation Mono', monospace;color:#2b2b2b;transform:scaleX(0.8889);">188.74</div><div class="t" style="left:594.85px;top:1059.72px;font:normal normal 22.50px/1 'Liberation Mono', monospace;color:#2b2b2b;transform:scaleX(0.8889);">194.76</div><div class="t" style="left:763.42px;top:1059.72px;font:normal normal 22.50px/1 'Liberation Mono', monospace;color:#2b2b2b;transform:scaleX(0.8889);">1.95</div><div class="t" style="left:884.47px;top:1059.72px;font:normal normal 22.50px/1 'Liberation Mono', monospace;color:#2b2b2b;transform:scaleX(0.8889);">188.74</div><div class="t" style="left:1028.15px;top:1059.72px;font:normal normal 22.50px/1 'Liberation Mono', monospace;color:#2b2b2b;transform:scaleX(0.8889);">194.76</div><div class="t" style="left:1184.77px;top:1059.72px;font:normal normal 22.50px/1 'Liberation Mono', monospace;color:#2b2b2b;transform:scaleX(0.8889);">14.28</div><div class="t" style="left:1317.77px;top:1059.72px;font:normal normal 22.50px/1 'Liberation Mono', monospace;color:#2b2b2b;transform:scaleX(0.8889);">188.74</div><div class="t" style="left:1461.45px;top:1059.72px;font:normal normal 22.50px/1 'Liberation Mono', monospace;color:#2b2b2b;transform:scaleX(0.8889);">194.76</div><div class="t" style="left:1630.05px;top:1059.72px;font:normal normal 22.50px/1 'Liberation Mono', monospace;color:#2b2b2b;transform:scaleX(0.8889);">6.06</div><div class="t" style="left:67.18px;top:1096.75px;font:normal bold 22.00px/1 'Liberation Sans', sans-serif;color:#1a1a1a;transform:scaleX(0.9000);">Technology</div><div class="t" style="left:305.92px;top:1096.44px;font:normal bold 22.50px/1 'Liberation Mono', monospace;color:#1a1a1a;transform:scaleX(0.8889);">175.28</div><div class="t" style="left:427.25px;top:1096.44px;font:normal bold 22.50px/1 'Liberation Mono', monospace;color:#1a1a1a;transform:scaleX(0.8889);">3,760.56</div><div class="t" style="left:570.13px;top:1096.44px;font:normal bold 22.50px/1 'Liberation Mono', monospace;color:#1a1a1a;transform:scaleX(0.8889);">4,669.74</div><div class="t" style="left:739.22px;top:1096.44px;font:normal bold 22.50px/1 'Liberation Mono', monospace;color:#1a1a1a;transform:scaleX(0.8889);">162.78</div><div class="t" style="left:860.55px;top:1096.44px;font:normal bold 22.50px/1 'Liberation Mono', monospace;color:#1a1a1a;transform:scaleX(0.8889);">3,760.56</div><div class="t" style="left:1003.43px;top:1096.44px;font:normal bold 22.50px/1 'Liberation Mono', monospace;color:#1a1a1a;transform:scaleX(0.8889);">4,669.74</div><div class="t" style="left:1172.57px;top:1096.44px;font:normal bold 22.50px/1 'Liberation Mono', monospace;color:#1a1a1a;transform:scaleX(0.8889);">226.36</div><div class="t" style="left:1293.85px;top:1096.44px;font:normal bold 22.50px/1 'Liberation Mono', monospace;color:#1a1a1a;transform:scaleX(0.8889);">3,760.56</div><div class="t" style="left:1436.73px;top:1096.44px;font:normal bold 22.50px/1 'Liberation Mono', monospace;color:#1a1a1a;transform:scaleX(0.8889);">4,669.74</div><div class="t" style="left:1617.95px;top:1096.44px;font:normal bold 22.50px/1 'Liberation Mono', monospace;color:#1a1a1a;transform:scaleX(0.8889);">56.19</div><div class="t" style="left:76.66px;top:1126.35px;font:normal normal 22.00px/1 'Liberation Sans', sans-serif;color:#252423;transform:scaleX(0.9000);">Accessories</div><div class="t" style="left:317.82px;top:1127.04px;font:normal normal 22.50px/1 'Liberation Mono', monospace;color:#2b2b2b;transform:scaleX(0.8889);">25.01</div><div class="t" style="left:451.17px;top:1127.04px;font:normal normal 22.50px/1 'Liberation Mono', monospace;color:#2b2b2b;transform:scaleX(0.8889);">901.74</div><div class="t" style="left:594.57px;top:1127.04px;font:normal normal 22.50px/1 'Liberation Mono', monospace;color:#2b2b2b;transform:scaleX(0.8889);">989.04</div><div class="t" style="left:751.57px;top:1127.04px;font:normal normal 22.50px/1 'Liberation Mono', monospace;color:#2b2b2b;transform:scaleX(0.8889);">40.52</div><div class="t" style="left:884.47px;top:1127.04px;font:normal normal 22.50px/1 'Liberation Mono', monospace;color:#2b2b2b;transform:scaleX(0.8889);">901.74</div><div class="t" style="left:1027.87px;top:1127.04px;font:normal normal 22.50px/1 'Liberation Mono', monospace;color:#2b2b2b;transform:scaleX(0.8889);">989.04</div><div class="t" style="left:1184.68px;top:1127.04px;font:normal normal 22.50px/1 'Liberation Mono', monospace;color:#2b2b2b;transform:scaleX(0.8889);">41.90</div><div class="t" style="left:1317.77px;top:1127.04px;font:normal normal 22.50px/1 'Liberation Mono', monospace;color:#2b2b2b;transform:scaleX(0.8889);">901.74</div><div class="t" style="left:1461.17px;top:1127.04px;font:normal normal 22.50px/1 'Liberation Mono', monospace;color:#2b2b2b;transform:scaleX(0.8889);">989.04</div><div class="t" style="left:1630.17px;top:1127.04px;font:normal normal 22.50px/1 'Liberation Mono', monospace;color:#2b2b2b;transform:scaleX(0.8889);">8.52</div></div>
<div class="L"><div style="position:absolute;left:1763.00px;top:5.00px;width:539.00px;height:1211.00px;background:#ffffff;"></div><div style="position:absolute;left:1757.00px;top:5.00px;width:5.00px;height:1211.00px;background:linear-gradient(to right, rgba(0,0,0,0), rgba(0,0,0,0.07));"></div><div style="position:absolute;left:1762.00px;top:5.00px;width:1.20px;height:1211.00px;background:#d4d4d4;"></div><div style="position:absolute;left:1763.20px;top:106.00px;width:530.80px;height:994.60px;background:#f4f4f4;"></div><div style="position:absolute;left:2281.00px;top:1077.00px;width:13.00px;height:23.60px;background:#ffffff;border-radius:0 0 6px 6px;"></div><div style="position:absolute;left:2281.00px;top:106.60px;width:13.00px;height:970.90px;background:#a8a8a8;border-radius:6px;"></div><div style="position:absolute;left:1792.50px;top:172.10px;width:459.10px;height:56.10px;background:#fff;box-sizing:border-box;border:1px solid #e1e1e1;"></div><div style="position:absolute;left:1792.40px;top:324.30px;width:170.60px;height:149.80px;background:#fff;box-sizing:border-box;border:2px solid #2f86d6;"></div><div style="position:absolute;left:1977.60px;top:324.30px;width:168.20px;height:149.80px;background:#fff;"></div><div style="position:absolute;left:1793.20px;top:542.10px;width:458.50px;height:181.20px;background:#fff;box-sizing:border-box;border:1px solid #e1e1e1;"></div><div style="position:absolute;left:2234.80px;top:550.60px;width:1.50px;height:35.10px;background:#111;"></div><div style="position:absolute;left:1792.80px;top:886.30px;width:458.90px;height:55.90px;background:#fff;box-sizing:border-box;border:1px solid #e1e1e1;"></div><div style="position:absolute;left:1792.60px;top:1008.60px;width:459.30px;height:64.20px;background:#fff;box-sizing:border-box;border:1px solid #e1e1e1;"></div><div style="position:absolute;left:1965.40px;top:1125.90px;width:144.60px;height:64.90px;background:#f3f3f3;"></div><div style="position:absolute;left:2124.30px;top:1125.90px;width:144.60px;height:64.90px;background:#0078d4;"></div><svg style="position:absolute;left:0;top:0" width="2304" height="1290" viewBox="0 0 2304 1290" fill="none"><polyline points="1807.7,55.6 1797.3,65.7 1807.7,75.8" stroke="#444" stroke-width="1.6" fill="none"/><circle cx="2137.1" cy="62.8" r="9.6" stroke="#333" stroke-width="1.3" fill="none"/><path d="M2137.1,60.6 V68.2" stroke="#333" stroke-width="1.8"/><circle cx="2137.1" cy="57.3" r="1.2" fill="#333"/><path d="M2255.4,60.8 L2275,79.7 M2275,60.8 L2255.4,79.7" stroke="#333" stroke-width="2"/><circle cx="1821.2" cy="401.2" r="10.2" stroke="#7a7a7a" stroke-width="1.6" fill="#fff"/><circle cx="1821.2" cy="401.2" r="6.3" fill="#707070"/><circle cx="2006.4" cy="401.2" r="10.2" stroke="#7a7a7a" stroke-width="1.6" fill="#fff"/><rect x="1860.8" y="367" width="8.2" height="21.3" fill="#6aa5e6" stroke="#1b5fb8" stroke-width="1.6"/><rect x="1883.9" y="367" width="7.4" height="21.3" fill="#6aa5e6" stroke="#1b5fb8" stroke-width="1.6"/><rect x="1904.5" y="367" width="8.3" height="21.3" fill="#6aa5e6" stroke="#1b5fb8" stroke-width="1.6"/><rect x="1846.8" y="360.2" width="65.3" height="27.5" stroke="#333" stroke-width="1.8" fill="none"/><path d="M1846.8,367 H1912.1 M1869,360.2 V388 M1891.3,360.2 V388 M1853.4,367 V388 M1877.3,367 V388 M1897.1,367 V388" stroke="#333" stroke-width="1.6"/><path d="M1864.4,357 V345 H1908.3 V357 M1885.5,345 V357" stroke="#1b5fb8" stroke-width="1.8" fill="none"/><polyline points="1860.2,352.5 1864.4,357.5 1868.6,352.5" stroke="#1b5fb8" stroke-width="1.8" fill="none"/><polyline points="1881.3,352.5 1885.5,357.5 1889.7,352.5" stroke="#1b5fb8" stroke-width="1.8" fill="none"/><polyline points="1904.1,352.5 1908.3,357.5 1912.5,352.5" stroke="#1b5fb8" stroke-width="1.8" fill="none"/><rect x="2086.4" y="359.5" width="9.6" height="28.5" fill="#6aa5e6" stroke="#1b5fb8" stroke-width="1.6"/><path d="M2086.4,360 H2032.3 V388 H2086.4 M2032.3,366.3 H2086.4 M2050.5,360 V388 M2068.6,360 V388 M2041.4,366.3 V388 M2059.6,366.3 V388 M2076.9,366.3 V388" stroke="#333" stroke-width="1.6" fill="none"/><path d="M2091.4,345.5 V357.5" stroke="#1b5fb8" stroke-width="1.8"/><polyline points="2087.2,352.5 2091.4,357.5 2095.6,352.5" stroke="#1b5fb8" stroke-width="1.8" fill="none"/><path d="M2218.5,519.5 L2235,503 M2226.5,503 H2235.2 V511.8 M2218.3,510.8 V519.7 H2227.2" stroke="#444" stroke-width="1.5" fill="none"/><path d="M1798.6,744.2 C1798.6,740 1794.8,738.5 1794.8,734.8 C1794.8,731.2 1798,728.8 1802.4,728.8 C1806.8,728.8 1810,731.2 1810,734.8 C1810,738.5 1806.2,740 1806.2,744.2 Z M1799,746.6 H1805.8 M1799.8,749.4 H1805" stroke="#666" stroke-width="1.4" fill="none"/><polyline points="2210.9,908.4 2221.4,919.6 2231.9,908.4" stroke="#333" stroke-width="1.6" fill="none"/><path d="M2236.5,1070 L2249,1057.5 M2243,1070.2 L2249.2,1064" stroke="#333" stroke-width="1.4"/></svg><div class="t" style="left:1845.75px;top:45.60px;font:normal normal 36.50px/1 'Liberation Sans', sans-serif;color:#252423;transform:scaleX(0.9527);">Formula Measure</div><div class="t" style="left:1792.18px;top:140.85px;font:normal normal 22.50px/1 'Liberation Sans', sans-serif;color:#252423;transform:scaleX(1.0382);-webkit-text-stroke:0.35px #252423;">Title</div><div class="t" style="left:1841.74px;top:139.77px;font:normal bold 22.00px/1 'Liberation Sans', sans-serif;color:#a4262c;transform:scaleX(0.9674);">*</div><div class="t" style="left:1814.90px;top:190.04px;font:normal normal 21.80px/1 'Liberation Sans', sans-serif;color:#333;transform:scaleX(0.9511);">last 2 year</div><div class="t" style="left:1791.67px;top:234.07px;font:normal normal 20.00px/1 'Liberation Sans', sans-serif;color:#6b6b6b;transform:scaleX(0.9316);">Display name of the measure is <b>last 2 YEAR</b></div><div class="t" style="left:1791.27px;top:285.95px;font:normal normal 22.50px/1 'Liberation Sans', sans-serif;color:#252423;transform:scaleX(0.9304);-webkit-text-stroke:0.35px #252423;">Insert as</div><div class="t" style="left:1877.44px;top:284.87px;font:normal bold 22.00px/1 'Liberation Sans', sans-serif;color:#a4262c;transform:scaleX(0.9674);">*</div><div class="t" style="left:1852.51px;top:398.95px;font:normal normal 22.50px/1 'Liberation Sans', sans-serif;color:#333;transform:scaleX(0.9041);">Visual</div><div class="t" style="left:1838.50px;top:431.15px;font:normal normal 22.50px/1 'Liberation Sans', sans-serif;color:#333;transform:scaleX(0.9209);">Measure</div><div class="t" style="left:2035.51px;top:398.95px;font:normal normal 22.50px/1 'Liberation Sans', sans-serif;color:#333;transform:scaleX(0.9176);">Visual</div><div class="t" style="left:2025.50px;top:431.15px;font:normal normal 22.50px/1 'Liberation Sans', sans-serif;color:#333;transform:scaleX(0.9663);">Column</div><div class="t" style="left:1791.46px;top:501.75px;font:normal normal 22.50px/1 'Liberation Sans', sans-serif;color:#252423;transform:scaleX(0.9432);-webkit-text-stroke:0.35px #252423;">Formula</div><div class="t" style="left:1877.74px;top:500.67px;font:normal bold 22.00px/1 'Liberation Sans', sans-serif;color:#a4262c;transform:scaleX(0.9674);">*</div><div class="t" style="left:1800.39px;top:555.95px;font:normal normal 22.50px/1 'Liberation Sans', sans-serif;color:#2e7bcf;transform:scaleX(0.8917);"><span style="color:#2e7bcf">SUM</span><span style="color:#35c43a">(</span><span style="color:#2e7bcf">SELECT</span><span style="color:#444">(</span><span style="color:#2e7bcf">[Sum of Sales]</span><span style="color:#444"> ,</span><span style="color:#2e7bcf">LASTNYEAR</span><span style="color:#444">(</span><span style="color:#2c9a44">2</span><span style="color:#444">))</span><span style="color:#35c43a">)</span></div><div class="t" style="left:1820.57px;top:729.50px;font:normal normal 20.20px/1 'Liberation Sans', sans-serif;color:#6b6b6b;transform:scaleX(0.9244);"><b>Example</b> : </div><div class="t" style="left:1913.27px;top:729.50px;font:italic normal 20.20px/1 'Liberation Sans', sans-serif;color:#7a7a7a;transform:scaleX(0.9648);"><i>[Sum of Sales] + [last 15 months]</i></div><div class="t" style="left:1820.57px;top:759.30px;font:normal normal 20.20px/1 'Liberation Sans', sans-serif;color:#6b6b6b;transform:scaleX(0.9203);">Use <b>Ctrl + Space</b> to open suggestion , also select</div><div class="t" style="left:1821.17px;top:787.90px;font:normal normal 20.20px/1 'Liberation Sans', sans-serif;color:#6b6b6b;transform:scaleX(0.9713);">any column or cell to insert the reference</div><div class="t" style="left:1791.25px;top:847.65px;font:normal normal 22.50px/1 'Liberation Sans', sans-serif;color:#252423;transform:scaleX(0.9488);-webkit-text-stroke:0.35px #252423;">Row aggregation type</div><div class="t" style="left:2006.44px;top:846.57px;font:normal bold 22.00px/1 'Liberation Sans', sans-serif;color:#a4262c;transform:scaleX(0.9674);">*</div><div class="t" style="left:1811.26px;top:904.05px;font:normal normal 22.50px/1 'Liberation Sans', sans-serif;color:#252423;transform:scaleX(0.9415);">Formula (Sum)</div><div class="t" style="left:1791.20px;top:970.65px;font:normal normal 22.50px/1 'Liberation Sans', sans-serif;color:#252423;transform:scaleX(0.9777);-webkit-text-stroke:0.35px #252423;">Description</div><div class="t" style="left:1801.78px;top:1020.65px;font:normal normal 22.50px/1 'Liberation Sans', sans-serif;color:#9e9e9e;transform:scaleX(1.0422);">Briefly describe the formula</div><div class="t" style="left:2002.03px;top:1147.30px;font:normal normal 23.50px/1 'Liberation Sans', sans-serif;color:#252423;transform:scaleX(0.9802);-webkit-text-stroke:0.3px #252423;">Cancel</div><div class="t" style="left:2157.64px;top:1147.30px;font:normal bold 23.50px/1 'Liberation Sans', sans-serif;color:#fff;transform:scaleX(0.9607);">Update</div></div>
<div class="L"><div style="position:absolute;left:708.60px;top:228.20px;width:265.90px;height:48.00px;background:#fff;box-sizing:border-box;border:1px solid #d9d9d9;"></div><div style="position:absolute;left:1751.00px;top:547.00px;width:11.00px;height:605.00px;background:#ffffff;"></div><div style="position:absolute;left:1751.00px;top:547.00px;width:12.00px;height:479.60px;background:#a8a8a8;border-radius:6px;"></div><div style="position:absolute;left:28.00px;top:1153.40px;width:1722.00px;height:12.60px;background:#f5f5f5;border-radius:6px;"></div><div style="position:absolute;left:28.00px;top:1153.40px;width:507.00px;height:12.60px;background:#a8a8a8;border-radius:6px;"></div><div style="position:absolute;left:2.00px;top:1168.00px;width:1761.00px;height:1.20px;background:#e0e0e0;"></div><div style="position:absolute;left:8.00px;top:1114.00px;width:24.00px;height:34.00px;background:#fafafa;box-sizing:border-box;border:1px solid #e3e3e3;box-shadow:0 1px 2px rgba(0,0,0,.15);"></div><div style="position:absolute;left:1621.50px;top:1179.50px;width:97.80px;height:34.90px;background:#fff;box-sizing:border-box;border:1.2px solid #a9a9a9;"></div><div style="position:absolute;left:0.00px;top:1224.00px;width:2302.00px;height:1.20px;background:#b5b5b5;"></div><div style="position:absolute;left:1140.00px;top:1221.20px;width:15.00px;height:4.80px;background:#9a9a9a;"></div><div style="position:absolute;left:0.00px;top:1222.00px;width:3.00px;height:5.00px;background:#9a9a9a;"></div><div style="position:absolute;left:2302.00px;top:0.00px;width:2.00px;height:1226.00px;background:repeating-linear-gradient(to bottom,#3a3a3a 0,#3a3a3a 2px,#ffffff 2px,#ffffff 5px);"></div><div style="position:absolute;left:2298.00px;top:0.00px;width:4.00px;height:7.50px;background:#999;"></div><div style="position:absolute;left:2290.00px;top:1222.00px;width:12.00px;height:4.00px;background:#999;"></div><div style="position:absolute;left:2298.00px;top:1214.50px;width:4.00px;height:11.50px;background:#999;"></div><svg style="position:absolute;left:0;top:0" width="2304" height="1290" viewBox="0 0 2304 1290" fill="none"><rect x="14.9" y="1123.3" width="2.6" height="2.6" fill="#333"/><rect x="14.9" y="1130.0" width="2.6" height="2.6" fill="#333"/><rect x="14.9" y="1136.5" width="2.6" height="2.6" fill="#333"/><rect x="21.9" y="1123.3" width="2.6" height="2.6" fill="#333"/><rect x="21.9" y="1130.0" width="2.6" height="2.6" fill="#333"/><rect x="21.9" y="1136.5" width="2.6" height="2.6" fill="#333"/><polygon points="1562.42,1189.26 1562.97,1191.06 1566.07,1191.35 1566.07,1195.05 1562.97,1195.34 1562.42,1197.14 1561.54,1198.81 1563.52,1201.20 1560.90,1203.82 1558.51,1201.84 1556.84,1202.72 1555.04,1203.27 1554.75,1206.37 1551.05,1206.37 1550.76,1203.27 1548.96,1202.72 1547.29,1201.84 1544.90,1203.82 1542.28,1201.20 1544.26,1198.81 1543.38,1197.14 1542.83,1195.34 1539.73,1195.05 1539.73,1191.35 1542.83,1191.06 1543.38,1189.26 1544.26,1187.59 1542.28,1185.20 1544.90,1182.58 1547.29,1184.56 1548.96,1183.68 1550.76,1183.13 1551.05,1180.03 1554.75,1180.03 1555.04,1183.13 1556.84,1183.68 1558.51,1184.56 1560.90,1182.58 1563.52,1185.20 1561.54,1187.59" fill="none" stroke="#333" stroke-width="1.50" stroke-linejoin="round"/><circle cx="1552.9" cy="1193.2" r="5.2" stroke="#1f4e9a" stroke-width="1.6" fill="none"/><path d="M1588,1194.7 H1605.5" stroke="#333" stroke-width="2"/><path d="M1730.3,1195.2 H1749.1 M1739.7,1186 V1204.4" stroke="#333" stroke-width="2"/><path d="M2205.5,1233.6 H2225 L2217,1242.3 V1250.6 H2213.4 V1242.3 Z" stroke="#666" stroke-width="1.3" stroke-linejoin="round" fill="none"/><path d="M2249.8,1235.5 H2242.2 V1249.8 H2258.4 V1244.5 M2242.2,1244.6 H2249.6 V1249.8 M2252.2,1242.3 L2258.1,1236.2 M2253.6,1235.6 H2258.5 V1240.8" stroke="#666" stroke-width="1.3" fill="none"/><circle cx="2277.5" cy="1241.2" r="1.6" fill="#666"/><circle cx="2285.3" cy="1241.2" r="1.6" fill="#666"/><circle cx="2293.1" cy="1241.2" r="1.6" fill="#666"/></svg><div class="t" style="left:723.17px;top:241.55px;font:normal normal 22.50px/1 'Liberation Sans', sans-serif;color:#252423;transform:scaleX(0.9797);">Insert data input column</div><div class="t" style="left:2.22px;top:1181.07px;font:normal normal 22.00px/1 'Liberation Sans', sans-serif;color:#252423;transform:scaleX(0.9712);">Total rows: 21</div><div class="t" style="left:1642.32px;top:1187.33px;font:normal normal 21.50px/1 'Liberation Mono', monospace;color:#333;transform:scaleX(1.0786);">100%</div></div>
</body></html>
